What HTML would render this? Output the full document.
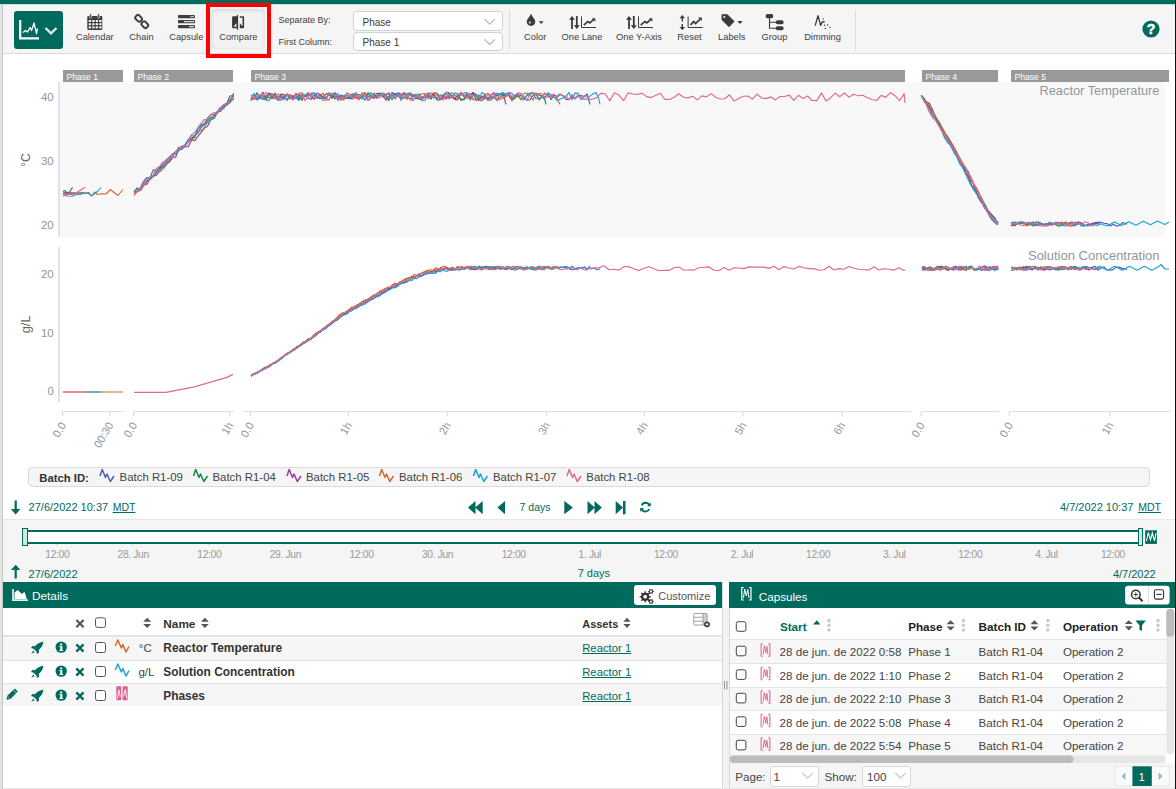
<!DOCTYPE html>
<html><head><meta charset="utf-8">
<style>
*{box-sizing:border-box;margin:0;padding:0}
html,body{width:1176px;height:789px;overflow:hidden;background:#fff;font-family:"Liberation Sans",sans-serif;position:relative}
.a{position:absolute}
.t{position:absolute;white-space:nowrap;line-height:1}
.tool{position:absolute;top:33px;width:70px;text-align:center;font-size:9.3px;color:#3d3d3d;white-space:nowrap;line-height:1}
svg{position:absolute;overflow:visible}
.teal{color:#00695c}
</style></head><body>
<!-- top strip -->
<div class="a" style="left:0;top:0;width:1176px;height:4px;background:#006a5d"></div>
<div class="a" style="left:0;top:4px;width:1176px;height:1px;background:#bfe3de"></div>
<!-- left border -->
<div class="a" style="left:0;top:4px;width:2px;height:785px;background:#e4e4e4"></div>
<div class="a" style="left:2px;top:4px;width:1px;height:785px;background:#c6c6c6"></div>
<!-- toolbar -->
<div class="a" style="left:3px;top:5px;width:1173px;height:48px;background:#f5f5f5"></div>
<div class="a" style="left:3px;top:53px;width:1173px;height:1px;background:#dcdcdc"></div>
<!-- teal view button -->
<div class="a" style="left:14px;top:11px;width:49px;height:38px;background:#006a5d;border-radius:3px"></div>
<svg style="left:0;top:0" width="70" height="55">
 <path d="M20.2 20 V38.3 H39" fill="none" stroke="#fff" stroke-width="2.2"/>
 <path d="M23 32.5 L25.5 30.5 L27.5 32 L30 27.5 L31.5 30.5 L34 23 L36.5 33.5 L37.5 28.5" fill="none" stroke="#fff" stroke-width="1.3" stroke-linejoin="round"/>
 <path d="M45.5 28 L51 33.3 L56.5 28" fill="none" stroke="#e8e8e8" stroke-width="2.4"/>
</svg>
<!-- Calendar -->
<svg style="left:0;top:0" width="110" height="40">
 <rect x="87.3" y="16" width="15" height="14" rx="1.2" fill="#3d3d3d"/>
 <rect x="89.7" y="13.8" width="1.8" height="4.5" rx="0.9" fill="#3d3d3d" stroke="#f5f5f5" stroke-width="0.6"/>
 <rect x="97.7" y="13.8" width="1.8" height="4.5" rx="0.9" fill="#3d3d3d" stroke="#f5f5f5" stroke-width="0.6"/>
 <g fill="#f5f5f5">
  <rect x="88.7" y="20" width="2.4" height="2"/><rect x="92.2" y="20" width="2.4" height="2"/><rect x="95.7" y="20" width="2.4" height="2"/><rect x="99.2" y="20" width="2.4" height="2"/>
  <rect x="88.7" y="23.2" width="2.4" height="2"/><rect x="92.2" y="23.2" width="2.4" height="2"/><rect x="95.7" y="23.2" width="2.4" height="2"/><rect x="99.2" y="23.2" width="2.4" height="2"/>
  <rect x="88.7" y="26.4" width="2.4" height="2"/><rect x="92.2" y="26.4" width="2.4" height="2"/><rect x="95.7" y="26.4" width="2.4" height="2"/><rect x="99.2" y="26.4" width="2.4" height="2"/>
 </g>
</svg>
<div class="tool" style="left:59.8px">Calendar</div>
<!-- Chain -->
<svg style="left:0;top:0" width="160" height="40">
 <rect x="-3.4" y="-2.5" width="6.8" height="5" rx="1.9" transform="translate(138.6 18.3) rotate(45)" fill="none" stroke="#3d3d3d" stroke-width="1.9"/>
 <rect x="-3.4" y="-2.5" width="6.8" height="5" rx="1.9" transform="translate(144.8 24.7) rotate(45)" fill="none" stroke="#3d3d3d" stroke-width="1.9"/>
</svg>
<div class="tool" style="left:106.5px">Chain</div>
<!-- Capsule -->
<svg style="left:0;top:0" width="200" height="40">
 <rect x="178" y="15" width="17" height="3.2" rx="0.8" fill="#3d3d3d"/>
 <rect x="178" y="20" width="17" height="3.2" rx="0.8" fill="#3d3d3d"/>
 <rect x="178" y="25" width="17" height="3.2" rx="0.8" fill="#3d3d3d"/>
 <rect x="190.5" y="15.9" width="3.6" height="1.4" fill="#bdbdbd"/>
 <rect x="184" y="20.9" width="10.1" height="1.4" fill="#d0d0d0"/>
 <rect x="189" y="25.9" width="5.1" height="1.4" fill="#d0d0d0"/>
</svg>
<div class="tool" style="left:151.3px">Capsule</div>
<!-- Compare (active with red box) -->
<div class="a" style="left:211px;top:9px;width:54px;height:40px;border-radius:4px;background:#f2f2f2;box-shadow:inset 0 1px 4px rgba(0,0,0,0.13)"></div>
<svg style="left:0;top:0" width="260" height="40">
 <path d="M232.1 17.2 Q232.1 16.2 233.1 16.2 H237.1 V28.2 H233.1 Q232.1 28.2 232.1 27.2 Z" fill="#383838"/>
 <path d="M233.5 26.7 H236.5 V22.9 Z" fill="#f3f3f3"/>
 <rect x="236.9" y="14.8" width="1.2" height="15" rx="0.6" fill="#383838"/>
 <path d="M239.8 16.2 H243.1 Q244.1 16.2 244.1 17.2 V27.2 Q244.1 28.2 243.1 28.2 H239.8 V26.6 H242.5 V17.8 H239.8 Z" fill="#383838"/>
 <path d="M239.8 23.2 L243.2 27 H239.8 Z" fill="#383838"/>
</svg>
<div class="tool" style="left:203.3px">Compare</div>
<div class="a" style="left:206px;top:3px;width:65px;height:55px;border:4px solid #ff0000"></div>
<!-- Separate by -->
<div class="t" style="left:278.5px;top:16.3px;font-size:9px;color:#3d3d3d">Separate By:</div>
<div class="t" style="left:278.5px;top:37.6px;font-size:9px;color:#3d3d3d">First Column:</div>
<div class="a" style="left:353px;top:11px;width:150px;height:20px;background:#fff;border:1px solid #d2d2d2;border-radius:4px"></div>
<div class="a" style="left:353px;top:32px;width:150px;height:19px;background:#fff;border:1px solid #d2d2d2;border-radius:4px"></div>
<div class="t" style="left:362.5px;top:17.8px;font-size:10px;color:#3a3a3a">Phase</div>
<div class="t" style="left:362.5px;top:38.1px;font-size:10px;color:#3a3a3a">Phase 1</div>
<svg style="left:0;top:0" width="510" height="55">
 <path d="M484.5 19 L489.8 24.2 L495 19" fill="none" stroke="#bdbdbd" stroke-width="1.3"/>
 <path d="M484.5 39.3 L489.8 44.5 L495 39.3" fill="none" stroke="#bdbdbd" stroke-width="1.3"/>
</svg>
<div class="a" style="left:509px;top:10px;width:1px;height:40px;background:#dcdcdc"></div>
<!-- Color -->
<svg style="left:0;top:0" width="560" height="40">
 <path d="M531 13.8 C529.8 16.8 526.7 19.2 526.7 21.8 C526.7 24.1 528.6 25.9 531 25.9 C533.4 25.9 535.3 24.1 535.3 21.8 C535.3 19.2 532.2 16.8 531 13.8 Z" fill="#3a3a3a"/>
 <circle cx="529.9" cy="22.6" r="1" fill="#f5f5f5"/>
 <path d="M538.8 21.3 H543.6 L541.2 23.9 Z" fill="#3a3a3a"/>
</svg>
<div class="tool" style="left:500.2px">Color</div>
<!-- One Lane -->
<svg style="left:0;top:0" width="670" height="40">
 <g transform="translate(0 0)">
 <g fill="#3a3a3a">
 <path d="M572 16 L575 19.8 H572.9 V29 H571.1 V19.8 H569 Z"/>
 <path d="M576.8 29 L579.8 25.2 H577.7 V16 H575.9 V25.2 H573.8 Z"/>
 </g>
 <path d="M581.5 16.5 V27.5 H596" fill="none" stroke="#3a3a3a" stroke-width="1"/>
 <path d="M583.8 25.2 L587.8 21.5 L589.8 23 L593.5 19.6" fill="none" stroke="#3a3a3a" stroke-width="1.7"/>
 <path d="M591.8 18.2 H595.3 V21.7 Z" fill="#3a3a3a"/>
 </g>
</svg>
<div class="tool" style="left:547px">One Lane</div>
<!-- One Y-Axis -->
<svg style="left:0;top:0" width="670" height="40">
 <g transform="translate(57 0)">
 <g fill="#3a3a3a">
 <path d="M572 16 L575 19.8 H572.9 V29 H571.1 V19.8 H569 Z"/>
 <path d="M576.8 29 L579.8 25.2 H577.7 V16 H575.9 V25.2 H573.8 Z"/>
 </g>
 <path d="M581.5 16.5 V27.5 H596" fill="none" stroke="#3a3a3a" stroke-width="1"/>
 <path d="M583.8 25.2 L587.8 21.5 L589.8 23 L593.5 19.6" fill="none" stroke="#3a3a3a" stroke-width="1.7"/>
 <path d="M591.8 18.2 H595.3 V21.7 Z" fill="#3a3a3a"/>
 </g>
</svg>
<div class="tool" style="left:604px">One Y-Axis</div>
<!-- Reset -->
<svg style="left:0;top:0" width="710" height="40">
 <path d="M682.3 15 L685 18.3 H683 V21.6 H681.6 V18.3 H679.6 Z" fill="#3a3a3a"/>
 <path d="M682.3 30.2 L685 26.9 H683 V23.9 H681.6 V26.9 H679.6 Z" fill="#3a3a3a"/>
 <path d="M688.1 16.4 V27.5 H702.7" fill="none" stroke="#3a3a3a" stroke-width="1"/>
 <path d="M690.5 24.9 L693.7 21.6 L695.6 23.6 L699.8 19.3" fill="none" stroke="#3a3a3a" stroke-width="1.7"/>
 <path d="M698 17.4 H701.8 V21.2 Z" fill="#3a3a3a"/>
</svg>
<div class="tool" style="left:654.5px">Reset</div>
<!-- Labels -->
<svg style="left:0;top:0" width="750" height="40">
 <path d="M722.1 14.7 H727 L733.8 21.4 L729 26.4 L722.1 19.6 Z" fill="#3a3a3a" stroke="#3a3a3a" stroke-width="1.1" stroke-linejoin="round"/>
 <circle cx="724.3" cy="16.9" r="1" fill="#f5f5f5"/>
 <path d="M737.4 21 H742.7 L740.05 24 Z" fill="#3a3a3a"/>
</svg>
<div class="tool" style="left:696.8px">Labels</div>
<!-- Group -->
<svg style="left:0;top:0" width="790" height="40">
 <rect x="765.7" y="14.1" width="7.5" height="4.1" rx="1.6" fill="#3a3a3a"/>
 <rect x="775.7" y="20.3" width="7.9" height="4" rx="1.8" fill="#3a3a3a"/>
 <rect x="775.7" y="26.2" width="7.9" height="4.1" rx="1.8" fill="#3a3a3a"/>
 <path d="M769.5 18 V28.3 H776.5 M769.5 22.3 H776.5" fill="none" stroke="#3a3a3a" stroke-width="1.1"/>
</svg>
<div class="tool" style="left:739.4px">Group</div>
<!-- Dimming -->
<svg style="left:0;top:0" width="840" height="40">
 <path d="M815.2 25.6 L818 15.6 L820.6 25.4 L822.3 21.7 L824.8 21.9" fill="none" stroke="#3a3a3a" stroke-width="1.3" stroke-linejoin="round"/>
 <g fill="#3a3a3a"><circle cx="823.3" cy="18.9" r="0.7"/><circle cx="824.5" cy="25.3" r="0.75"/><circle cx="827.7" cy="25" r="0.75"/><circle cx="825.3" cy="28.4" r="0.75"/><circle cx="830" cy="27.4" r="0.7"/></g>
</svg>
<div class="tool" style="left:787.5px">Dimming</div>
<div class="a" style="left:855px;top:10px;width:1px;height:40px;background:#dcdcdc"></div>
<!-- help -->
<svg style="left:0;top:0" width="1176" height="50">
 <circle cx="1151" cy="29" r="8.6" fill="#006a5d"/>
 <text x="1151.1" y="34.4" text-anchor="middle" font-family="Liberation Sans" font-weight="bold" font-size="14" fill="#fff" stroke="#fff" stroke-width="0.5">?</text>
</svg>
<!-- chart frame -->
<div class="a" style="left:60px;top:82px;width:1105px;height:155px;background:#f8f8f8"></div>
<div class="a" style="left:58px;top:82px;width:2px;height:155px;background:#dde3ea"></div>
<div class="a" style="left:58px;top:247px;width:2px;height:155px;background:#dde3ea"></div>
<!-- phase bars -->
<div class="a" style="left:63px;top:70px;width:60px;height:12px;background:#999"></div>
<div class="a" style="left:134px;top:70px;width:99px;height:12px;background:#999"></div>
<div class="a" style="left:251px;top:70px;width:654px;height:12px;background:#999"></div>
<div class="a" style="left:922px;top:70px;width:76px;height:12px;background:#999"></div>
<div class="a" style="left:1011px;top:70px;width:158px;height:12px;background:#999"></div>
<div class="t" style="left:66.5px;top:72.5px;font-size:8.6px;color:#fff">Phase 1</div>
<div class="t" style="left:137.5px;top:72.5px;font-size:8.6px;color:#fff">Phase 2</div>
<div class="t" style="left:254.5px;top:72.5px;font-size:8.6px;color:#fff">Phase 3</div>
<div class="t" style="left:925.5px;top:72.5px;font-size:8.6px;color:#fff">Phase 4</div>
<div class="t" style="left:1014.5px;top:72.5px;font-size:8.6px;color:#fff">Phase 5</div>
<!-- y labels -->
<div class="t" style="left:41px;top:91.5px;font-size:11.4px;color:#8c979c">40</div>
<div class="t" style="left:41px;top:155.5px;font-size:11.4px;color:#8c979c">30</div>
<div class="t" style="left:41px;top:219.5px;font-size:11.4px;color:#8c979c">20</div>
<div class="t" style="left:41px;top:268.5px;font-size:11.4px;color:#8c979c">20</div>
<div class="t" style="left:41px;top:327.5px;font-size:11.4px;color:#8c979c">10</div>
<div class="t" style="left:47.5px;top:386px;font-size:11.4px;color:#8c979c">0</div>
<div class="t" style="left:19px;top:153.5px;font-size:12px;color:#666;transform:rotate(-90deg);transform-origin:50% 50%">°C</div>
<div class="t" style="left:17px;top:317.5px;font-size:12.8px;color:#666;transform:rotate(-90deg);transform-origin:50% 50%">g/L</div>
<div class="t" style="right:16.5px;top:85px;font-size:12.8px;color:#8d989d">Reactor Temperature</div>
<div class="t" style="right:16.5px;top:249px;font-size:13px;color:#8d989d">Solution Concentration</div>
<!-- x axis -->
<svg style="left:0;top:0" width="1176" height="450">
 <g stroke="#d8dfe8" stroke-width="1.2" fill="none">
  <path d="M62.6 411.5 H123 M62.6 411.5 V416 M109.8 411.5 V416"/>
  <path d="M133.3 411.5 H233.8 M133.6 411.5 V416 M229.7 411.5 V416"/>
  <path d="M244 411.5 H911 M250.5 411.5 V416 M348.3 411.5 V416 M447.3 411.5 V416 M546.4 411.5 V416 M644.3 411.5 V416 M742.9 411.5 V416 M841.8 411.5 V416"/>
  <path d="M921.2 411.5 H998.9 M921.2 411.5 V416"/>
  <path d="M1009.5 411.5 H1170.4 M1009.5 411.5 V416 M1110 411.5 V416"/>
 </g>
 <g font-family="Liberation Sans" font-size="11" fill="#8c979c" text-anchor="end">
  <text transform="translate(66.5 425) rotate(-60)">0.0</text>
  <text transform="translate(113.7 425) rotate(-60)">00:30</text>
  <text transform="translate(137.5 425) rotate(-60)">0.0</text>
  <text transform="translate(233.6 425) rotate(-60)">1h</text>
  <text transform="translate(254.4 425) rotate(-60)">0.0</text>
  <text transform="translate(352.2 425) rotate(-60)">1h</text>
  <text transform="translate(451.2 425) rotate(-60)">2h</text>
  <text transform="translate(550.3 425) rotate(-60)">3h</text>
  <text transform="translate(648.2 425) rotate(-60)">4h</text>
  <text transform="translate(746.8 425) rotate(-60)">5h</text>
  <text transform="translate(845.7 425) rotate(-60)">6h</text>
  <text transform="translate(925.1 425) rotate(-60)">0.0</text>
  <text transform="translate(1013.4 425) rotate(-60)">0.0</text>
  <text transform="translate(1113.9 425) rotate(-60)">1h</text>
 </g>
</svg>
<svg style="left:0;top:0" width="1176" height="420"><path d="M63.0 193.0 L66.0 194.5 L69.0 192.5 L72.0 194.0 L76.0 193.0 L80.0 194.5 L84.0 193.0 L87.0 193.5" fill="none" stroke="#4a5fae" stroke-width="1.15" stroke-opacity="1.0" stroke-linejoin="round"/><path d="M63.0 191.5 L65.0 190.5 L67.0 193.0 L69.0 192.0" fill="none" stroke="#12884a" stroke-width="1.15" stroke-opacity="1.0" stroke-linejoin="round"/><path d="M63.0 193.5 L66.0 192.0 L68.5 194.5 L70.5 190.5 L72.5 187.6" fill="none" stroke="#9a3c9c" stroke-width="1.15" stroke-opacity="1.0" stroke-linejoin="round"/><path d="M63.0 194.0 L67.0 193.5 L72.0 192.5 L77.0 193.0 L81.0 192.2 L86.0 193.0 L89.0 192.5 L91.5 196.0 L95.0 192.0 L97.0 194.5 L101.0 193.8 L106.0 194.0 L110.5 189.5 L114.0 192.5 L118.0 195.5 L123.0 189.5" fill="none" stroke="#d16a2b" stroke-width="1.15" stroke-opacity="1.0" stroke-linejoin="round"/><path d="M63.0 196.0 L66.0 195.3 L70.0 194.0 L74.0 195.5 L78.5 194.0 L83.0 193.5 L88.0 193.0 L91.5 195.7 L95.0 193.5 L98.0 191.0 L101.0 187.5" fill="none" stroke="#1ca2da" stroke-width="1.15" stroke-opacity="1.0" stroke-linejoin="round"/><path d="M63.0 195.0 L67.0 196.0 L72.0 196.5 L75.0 194.0 L79.0 191.0 L85.0 187.2" fill="none" stroke="#e06894" stroke-width="1.15" stroke-opacity="1.0" stroke-linejoin="round"/><path d="M134.0 193.0 L137.2 191.8 L140.4 187.5 L143.6 181.3 L146.8 177.6 L150.0 178.2 L153.2 169.9 L156.4 170.6 L159.6 168.2 L162.8 163.4 L166.0 160.2 L169.2 157.2 L172.4 154.5 L175.6 151.6 L178.8 149.0 L182.0 146.1 L185.2 146.1 L188.4 141.7 L191.6 137.9 L194.8 135.9 L198.0 128.6 L201.2 124.9 L204.4 123.5 L207.6 118.1 L210.8 114.7 L214.0 115.1 L217.2 111.9 L220.4 111.4 L223.6 107.1 L226.8 103.8 L230.0 99.9 L233.2 95.4 L233.5 93.5" fill="none" stroke="#4a5fae" stroke-width="1.15" stroke-opacity="1.0" stroke-linejoin="round"/><path d="M134.0 191.8 L137.2 187.9 L140.4 189.6 L143.6 182.4 L146.8 181.6 L150.0 177.2 L153.2 176.8 L156.4 172.7 L159.6 167.1 L162.8 167.4 L166.0 164.8 L169.2 161.9 L172.4 157.8 L175.6 151.7 L178.8 149.7 L182.0 149.3 L185.2 144.7 L188.4 140.2 L191.6 140.0 L194.8 135.4 L198.0 132.5 L201.2 127.4 L204.4 124.6 L207.6 121.2 L210.8 117.0 L214.0 118.6 L217.2 112.8 L220.4 109.4 L223.6 104.8 L226.8 103.3 L230.0 96.0 L233.2 95.5 L233.5 93.6" fill="none" stroke="#12884a" stroke-width="1.15" stroke-opacity="1.0" stroke-linejoin="round"/><path d="M134.0 192.1 L137.2 188.9 L140.4 189.8 L143.6 183.7 L146.8 184.4 L150.0 178.9 L153.2 176.1 L156.4 175.3 L159.6 170.9 L162.8 166.1 L166.0 162.1 L169.2 162.0 L172.4 157.1 L175.6 157.2 L178.8 149.0 L182.0 148.6 L185.2 146.7 L188.4 146.6 L191.6 140.0 L194.8 140.7 L198.0 136.1 L201.2 132.3 L204.4 127.9 L207.6 126.2 L210.8 119.3 L214.0 116.0 L217.2 112.1 L220.4 107.4 L223.6 105.4 L226.8 105.4 L230.0 102.3 L233.2 94.6 L233.5 96.5" fill="none" stroke="#9a3c9c" stroke-width="1.15" stroke-opacity="1.0" stroke-linejoin="round"/><path d="M134.0 195.7 L137.2 191.4 L140.4 190.6 L143.6 186.1 L146.8 182.0 L150.0 177.1 L153.2 175.6 L156.4 169.9 L159.6 171.8 L162.8 169.4 L166.0 165.4 L169.2 158.1 L172.4 156.9 L175.6 153.1 L178.8 148.8 L182.0 147.8 L185.2 146.0 L188.4 141.1 L191.6 140.8 L194.8 137.2 L198.0 130.8 L201.2 130.6 L204.4 127.7 L207.6 120.8 L210.8 119.7 L214.0 116.3 L217.2 113.6 L220.4 108.1 L223.6 107.7 L226.8 103.7 L230.0 102.3 L233.2 98.5 L233.5 95.1" fill="none" stroke="#d16a2b" stroke-width="1.15" stroke-opacity="1.0" stroke-linejoin="round"/><path d="M134.0 191.8 L137.2 188.8 L140.4 189.7 L143.6 183.5 L146.8 179.8 L150.0 179.9 L153.2 176.1 L156.4 171.0 L159.6 169.0 L162.8 167.9 L166.0 161.9 L169.2 159.5 L172.4 153.8 L175.6 154.0 L178.8 150.8 L182.0 147.9 L185.2 144.4 L188.4 139.4 L191.6 135.2 L194.8 135.2 L198.0 133.0 L201.2 126.1 L204.4 123.8 L207.6 123.0 L210.8 120.2 L214.0 118.2 L217.2 111.6 L220.4 109.5 L223.6 108.8 L226.8 104.0 L230.0 102.1 L233.2 99.6 L233.5 98.3" fill="none" stroke="#1ca2da" stroke-width="1.15" stroke-opacity="1.0" stroke-linejoin="round"/><path d="M134.0 193.4 L137.2 189.8 L140.4 188.3 L143.6 181.9 L146.8 183.1 L150.0 177.0 L153.2 176.0 L156.4 168.5 L159.6 166.6 L162.8 162.1 L166.0 161.2 L169.2 157.5 L172.4 157.3 L175.6 152.1 L178.8 146.9 L182.0 148.6 L185.2 145.6 L188.4 141.7 L191.6 134.6 L194.8 132.4 L198.0 127.5 L201.2 123.2 L204.4 119.5 L207.6 119.5 L210.8 114.8 L214.0 112.5 L217.2 113.4 L220.4 108.6 L223.6 104.6 L226.8 104.2 L230.0 99.4 L233.2 97.2 L233.5 94.9" fill="none" stroke="#e06894" stroke-width="1.15" stroke-opacity="1.0" stroke-linejoin="round"/><path d="M251.0 98.7 L254.0 93.7 L257.0 100.0 L260.0 97.3 L263.0 95.1 L266.0 100.2 L269.0 93.6 L272.0 96.6 L275.0 93.1 L278.0 100.4 L281.0 97.1 L284.0 99.1 L287.0 94.7 L290.0 99.0 L293.0 98.2 L296.0 97.7 L299.0 100.3 L302.0 95.9 L305.0 95.8 L308.0 98.1 L311.0 99.3 L314.0 95.1 L317.0 97.9 L320.0 94.1 L323.0 96.9 L326.0 98.8 L329.0 92.8 L332.0 98.4 L335.0 92.4 L338.0 100.4 L341.0 96.2 L344.0 95.7 L347.0 98.4 L350.0 96.7 L353.0 98.4 L356.0 93.0 L359.0 97.0 L362.0 97.0 L365.0 100.1 L368.0 92.6 L371.0 96.1 L374.0 97.6 L377.0 96.9 L380.0 92.9 L383.0 97.3 L386.0 94.2 L389.0 93.9 L392.0 99.7 L395.0 94.0 L398.0 96.1 L401.0 98.6 L404.0 98.2 L407.0 96.9 L410.0 99.1 L413.0 96.2 L416.0 97.5 L419.0 99.2 L422.0 98.0 L425.0 97.7 L428.0 95.7 L431.0 97.0 L434.0 95.6 L437.0 98.6 L440.0 95.5 L443.0 96.2 L446.0 98.6 L449.0 96.5 L452.0 95.1 L455.0 99.2 L458.0 95.5 L461.0 99.4 L464.0 98.9 L467.0 96.1 L470.0 98.3 L473.0 92.6 L476.0 95.6 L479.0 99.5 L482.0 97.2 L485.0 97.0 L488.0 97.9 L491.0 98.0 L494.0 97.2 L497.0 95.8 L500.0 93.8 L503.0 94.8 L506.0 94.8 L509.0 95.9 L512.0 100.7 L515.0 95.3 L518.0 96.1 L521.0 95.4 L524.0 97.2 L527.0 100.3 L530.0 99.8 L533.0 95.5 L536.0 94.5 L539.0 99.7 L542.0 96.4 L545.0 98.1 L548.0 92.9 L551.0 99.6 L554.0 94.9 L557.0 96.5 L560.0 94.0 L563.0 95.8 L566.0 99.3 L569.0 99.3 L572.0 96.3 L575.0 98.8 L578.0 96.1 L581.0 95.4 L584.0 96.9 L587.0 94.0 L590.0 104.5" fill="none" stroke="#4a5fae" stroke-width="1.15" stroke-opacity="1.0" stroke-linejoin="round"/><path d="M251.0 98.2 L254.0 98.8 L257.0 92.8 L260.0 98.5 L263.0 99.2 L266.0 96.0 L269.0 92.8 L272.0 98.0 L275.0 94.4 L278.0 97.7 L281.0 95.5 L284.0 97.7 L287.0 94.5 L290.0 96.3 L293.0 96.7 L296.0 97.6 L299.0 94.0 L302.0 100.4 L305.0 94.7 L308.0 94.9 L311.0 94.5 L314.0 92.9 L317.0 95.9 L320.0 98.8 L323.0 98.3 L326.0 93.9 L329.0 93.5 L332.0 95.0 L335.0 98.8 L338.0 96.4 L341.0 100.1 L344.0 97.8 L347.0 97.5 L350.0 98.7 L353.0 98.6 L356.0 95.2 L359.0 94.5 L362.0 96.0 L365.0 96.4 L368.0 93.5 L371.0 96.0 L374.0 97.7 L377.0 93.4 L380.0 93.5 L383.0 93.8 L386.0 94.7 L389.0 100.4 L392.0 92.5 L395.0 93.8 L398.0 93.7 L401.0 96.3 L404.0 92.4 L407.0 96.1 L410.0 93.7 L413.0 94.6 L416.0 99.0 L419.0 93.8 L422.0 97.5 L425.0 95.7 L428.0 95.8 L431.0 99.2 L434.0 93.7 L437.0 100.1 L440.0 99.8 L443.0 97.9 L446.0 92.7 L449.0 97.9 L452.0 97.3 L455.0 98.8 L458.0 94.1 L461.0 100.3 L464.0 99.7 L467.0 93.3 L470.0 94.9 L473.0 92.6 L476.0 99.3 L479.0 100.0 L482.0 100.6 L485.0 97.4 L488.0 97.9 L491.0 98.0 L494.0 97.1 L497.0 100.3 L500.0 97.4 L503.0 95.1 L506.0 96.6 L509.0 92.5 L512.0 98.4 L515.0 98.1 L518.0 95.8 L521.0 99.5 L524.0 98.6 L527.0 95.1 L530.0 93.0 L533.0 93.4 L536.0 93.8 L539.0 94.9 L542.0 96.1 L545.0 100.1 L546.0 104.5" fill="none" stroke="#12884a" stroke-width="1.15" stroke-opacity="1.0" stroke-linejoin="round"/><path d="M251.0 99.8 L254.0 98.0 L257.0 99.5 L260.0 95.7 L263.0 92.3 L266.0 98.9 L269.0 94.4 L272.0 93.5 L275.0 99.0 L278.0 98.1 L281.0 94.1 L284.0 94.5 L287.0 100.2 L290.0 94.6 L293.0 98.2 L296.0 93.4 L299.0 99.1 L302.0 93.3 L305.0 96.6 L308.0 92.6 L311.0 96.9 L314.0 99.4 L317.0 93.0 L320.0 94.6 L323.0 98.7 L326.0 97.4 L329.0 94.9 L332.0 97.6 L335.0 96.1 L338.0 99.5 L341.0 94.8 L344.0 98.7 L347.0 97.6 L350.0 98.5 L353.0 95.5 L356.0 98.4 L359.0 98.2 L362.0 95.6 L365.0 92.5 L368.0 100.4 L371.0 98.3 L374.0 94.0 L377.0 98.4 L380.0 94.6 L383.0 96.2 L386.0 99.5 L389.0 96.1 L392.0 94.7 L395.0 94.9 L398.0 92.9 L401.0 94.1 L404.0 94.6 L407.0 93.8 L410.0 92.8 L413.0 96.2 L416.0 94.1 L419.0 98.5 L422.0 100.0 L425.0 94.6 L428.0 97.1 L431.0 96.6 L434.0 92.9 L437.0 93.3 L440.0 99.7 L443.0 96.3 L446.0 99.1 L449.0 92.9 L452.0 97.3 L455.0 99.6 L458.0 99.6 L461.0 92.3 L464.0 96.7 L467.0 95.4 L470.0 98.7 L473.0 92.9 L476.0 94.5 L479.0 99.1 L482.0 96.2 L485.0 96.1 L488.0 100.4 L491.0 95.0 L494.0 92.7 L497.0 95.6 L500.0 93.6 L503.0 93.0 L506.0 104.5" fill="none" stroke="#9a3c9c" stroke-width="1.15" stroke-opacity="1.0" stroke-linejoin="round"/><path d="M251.0 100.3 L254.0 97.2 L257.0 97.7 L260.0 95.0 L263.0 97.1 L266.0 98.6 L269.0 97.2 L272.0 99.0 L275.0 96.9 L278.0 94.0 L281.0 97.2 L284.0 96.4 L287.0 93.7 L290.0 97.5 L293.0 99.2 L296.0 93.4 L299.0 96.9 L302.0 98.5 L305.0 95.7 L308.0 94.6 L311.0 95.4 L314.0 96.9 L317.0 98.1 L320.0 97.0 L323.0 93.2 L326.0 99.2 L329.0 100.1 L332.0 93.2 L335.0 94.4 L338.0 93.8 L341.0 99.4 L344.0 99.9 L347.0 92.7 L350.0 95.1 L353.0 93.9 L356.0 96.2 L359.0 100.0 L362.0 92.9 L365.0 93.7 L368.0 96.4 L371.0 96.7 L374.0 98.6 L377.0 96.0 L380.0 93.5 L383.0 95.3 L386.0 100.5 L389.0 98.6 L392.0 93.3 L395.0 99.1 L398.0 94.9 L401.0 98.9 L404.0 92.4 L407.0 99.6 L410.0 93.7 L413.0 96.1 L416.0 97.9 L419.0 96.6 L422.0 93.7 L425.0 93.5 L428.0 94.7 L431.0 92.7 L434.0 94.1 L437.0 93.4 L440.0 96.2 L443.0 95.3 L446.0 97.2 L449.0 94.7 L452.0 92.6 L455.0 95.1 L458.0 98.6 L461.0 94.4 L464.0 95.7 L467.0 98.6 L470.0 95.7 L473.0 99.8 L476.0 100.0 L479.0 94.9 L482.0 98.5 L485.0 94.4 L488.0 93.5 L491.0 96.0 L494.0 97.4 L497.0 100.2 L500.0 93.5 L503.0 98.3 L506.0 96.3 L509.0 93.4 L512.0 100.5 L515.0 98.1 L518.0 93.4 L521.0 99.9 L524.0 93.2 L527.0 93.1 L530.0 95.1 L533.0 100.2 L536.0 92.6 L539.0 100.0 L542.0 97.4 L545.0 92.9 L548.0 97.1 L551.0 96.2 L554.0 97.0 L557.0 98.5 L560.0 104.5" fill="none" stroke="#d16a2b" stroke-width="1.15" stroke-opacity="1.0" stroke-linejoin="round"/><path d="M251.0 100.7 L254.0 93.6 L257.0 99.1 L260.0 95.8 L263.0 98.9 L266.0 99.8 L269.0 100.6 L272.0 94.5 L275.0 96.1 L278.0 100.2 L281.0 100.2 L284.0 95.4 L287.0 100.2 L290.0 95.7 L293.0 95.4 L296.0 98.7 L299.0 96.3 L302.0 96.1 L305.0 95.5 L308.0 95.9 L311.0 93.5 L314.0 92.8 L317.0 98.6 L320.0 97.0 L323.0 97.9 L326.0 99.0 L329.0 94.2 L332.0 94.3 L335.0 94.6 L338.0 94.9 L341.0 98.7 L344.0 95.4 L347.0 95.0 L350.0 97.6 L353.0 93.9 L356.0 93.2 L359.0 98.2 L362.0 98.7 L365.0 94.8 L368.0 97.6 L371.0 92.6 L374.0 95.7 L377.0 97.2 L380.0 94.4 L383.0 95.2 L386.0 97.4 L389.0 97.3 L392.0 93.6 L395.0 98.2 L398.0 93.0 L401.0 100.4 L404.0 94.0 L407.0 94.4 L410.0 94.0 L413.0 100.6 L416.0 94.7 L419.0 97.4 L422.0 100.6 L425.0 100.3 L428.0 92.7 L431.0 96.7 L434.0 97.4 L437.0 98.2 L440.0 95.1 L443.0 95.1 L446.0 92.3 L449.0 92.6 L452.0 96.9 L455.0 92.9 L458.0 94.0 L461.0 95.1 L464.0 92.9 L467.0 92.6 L470.0 100.1 L473.0 96.0 L476.0 94.0 L479.0 98.3 L482.0 92.4 L485.0 94.4 L488.0 100.4 L491.0 99.8 L494.0 97.6 L497.0 93.1 L500.0 95.0 L503.0 92.5 L506.0 94.1 L509.0 92.5 L512.0 93.4 L515.0 97.6 L518.0 93.1 L521.0 93.6 L524.0 99.9 L527.0 95.1 L530.0 95.1 L533.0 93.0 L536.0 99.0 L539.0 98.0 L542.0 96.9 L545.0 97.5 L548.0 93.1 L551.0 94.5 L554.0 97.2 L557.0 100.3 L560.0 99.2 L563.0 97.7 L566.0 96.7 L569.0 92.4 L572.0 99.8 L575.0 92.9 L578.0 93.4 L581.0 98.1 L584.0 99.1 L587.0 98.9 L590.0 96.1 L593.0 93.8 L596.0 92.6 L599.0 99.5 L600.0 104.5" fill="none" stroke="#1ca2da" stroke-width="1.15" stroke-opacity="1.0" stroke-linejoin="round"/><path d="M251.0 94.4 L254.0 99.6 L257.0 95.7 L260.0 94.9 L263.0 96.5 L266.0 92.4 L269.0 96.0 L272.0 94.0 L275.0 98.3 L278.0 96.5 L281.0 99.6 L284.0 99.8 L287.0 95.0 L290.0 94.7 L293.0 100.2 L296.0 96.5 L299.0 93.1 L302.0 92.7 L305.0 100.6 L308.0 97.2 L311.0 92.8 L314.0 96.6 L317.0 96.5 L320.0 96.0 L323.0 100.3 L326.0 100.3 L329.0 93.3 L332.0 93.6 L335.0 95.7 L338.0 99.3 L341.0 97.5 L344.0 98.4 L347.0 97.1 L350.0 94.1 L353.0 99.2 L356.0 92.4 L359.0 98.2 L362.0 93.9 L365.0 96.3 L368.0 100.5 L371.0 96.8 L374.0 92.8 L377.0 95.9 L380.0 97.8 L383.0 92.8 L386.0 94.4 L389.0 92.5 L392.0 96.8 L395.0 95.5 L398.0 96.5 L401.0 94.8 L404.0 97.8 L407.0 93.8 L410.0 99.9 L413.0 100.4 L416.0 96.4 L419.0 96.2 L422.0 99.5 L425.0 94.7 L428.0 99.0 L431.0 94.7 L434.0 98.3 L437.0 95.1 L440.0 97.4 L443.0 100.1 L446.0 92.8 L449.0 99.1 L452.0 96.9 L455.0 95.5 L458.0 95.2 L461.0 92.9 L464.0 94.5 L467.0 97.5 L470.0 93.1 L473.0 97.9 L476.0 100.4 L479.0 100.5 L482.0 99.8 L485.0 99.1 L488.0 93.8 L491.0 100.4 L494.0 94.0 L497.0 99.6 L500.0 99.7 L503.0 97.5 L506.0 96.7 L509.0 94.0 L512.0 96.7 L515.0 94.7 L518.0 93.4 L521.0 93.4 L524.0 99.0 L527.0 100.0 L530.0 93.5 L533.0 92.4 L536.0 94.5 L539.0 93.4 L542.0 93.9 L545.0 97.2 L548.0 95.8 L551.0 95.9 L554.0 94.0 L557.0 97.9 L560.0 94.7 L563.0 95.7 L566.0 96.2 L569.0 99.9 L572.0 94.4 L575.0 98.3 L578.0 94.9 L581.0 99.8 L584.0 95.6 L587.0 96.5 L590.0 99.7 L596.0 98.3 L600.6 93.4 L605.2 93.7 L609.8 100.9 L614.4 92.8 L619.0 95.1 L623.6 100.7 L628.2 92.7 L632.8 94.0 L637.4 94.4 L642.0 93.3 L646.6 96.6 L651.2 97.6 L655.8 95.3 L660.4 93.5 L665.0 99.4 L669.6 99.4 L674.2 97.3 L678.8 93.8 L683.4 97.2 L688.0 97.9 L692.6 96.2 L697.2 99.9 L701.8 95.9 L706.4 96.9 L711.0 93.6 L715.6 97.3 L720.2 99.0 L724.8 98.7 L729.4 94.8 L734.0 100.9 L738.6 98.6 L743.2 96.2 L747.8 96.1 L752.4 99.1 L757.0 94.1 L761.6 98.0 L766.2 98.6 L770.8 96.9 L775.4 99.9 L780.0 96.5 L784.6 96.5 L789.2 95.0 L793.8 100.3 L798.4 95.3 L803.0 98.4 L807.6 96.0 L812.2 100.5 L816.8 100.6 L821.4 92.9 L826.0 101.0 L830.6 97.7 L835.2 93.2 L839.8 96.8 L844.4 93.0 L849.0 97.2 L853.6 94.2 L858.2 95.7 L862.8 95.2 L867.4 97.7 L872.0 99.5 L876.6 100.5 L881.2 95.4 L885.8 97.4 L890.4 92.6 L895.0 95.7 L899.6 100.7 L904.2 93.6 L905.0 103.0" fill="none" stroke="#e06894" stroke-width="1.15" stroke-opacity="1.0" stroke-linejoin="round"/><path d="M922.4 96.6 L924.9 99.7 L927.4 106.1 L930.1 108.9 L933.3 116.6 L936.6 118.7 L940.4 124.1 L942.5 132.0 L945.0 136.1 L947.7 140.2 L951.4 146.9 L954.5 151.4 L957.5 157.7 L961.1 163.8 L964.4 169.6 L967.0 171.8 L969.2 179.4 L972.2 186.3 L975.9 189.6 L979.1 196.3 L981.3 199.0 L984.2 207.5 L987.0 211.2 L990.2 217.3 L993.4 221.1 L997.3 224.5 L998.0 222.2" fill="none" stroke="#4a5fae" stroke-width="1.15" stroke-opacity="1.0" stroke-linejoin="round"/><path d="M921.8 95.6 L925.1 101.0 L928.9 106.5 L932.4 110.6 L934.8 115.0 L937.7 121.6 L940.7 125.6 L944.6 132.8 L946.8 135.4 L949.8 140.1 L953.6 148.2 L956.4 151.4 L959.0 158.9 L962.1 163.2 L964.7 168.2 L968.5 171.9 L970.7 180.1 L973.1 182.7 L975.3 191.7 L978.7 196.7 L981.3 199.8 L985.1 204.5 L988.8 212.4 L992.7 215.7 L995.2 218.5 L997.2 223.0 L998.0 223.0" fill="none" stroke="#12884a" stroke-width="1.15" stroke-opacity="1.0" stroke-linejoin="round"/><path d="M922.7 97.9 L926.0 101.6 L929.4 103.2 L932.9 110.6 L935.0 116.7 L937.3 122.2 L940.3 126.5 L942.5 132.4 L945.6 137.6 L949.1 141.0 L952.4 145.3 L955.7 153.1 L957.9 156.0 L960.4 162.3 L964.2 170.2 L966.5 173.8 L969.7 179.1 L971.8 186.2 L975.7 188.9 L978.1 197.2 L981.0 202.2 L984.2 205.5 L987.6 210.2 L991.5 214.3 L995.0 221.7 L997.8 221.7 L998.0 222.0" fill="none" stroke="#9a3c9c" stroke-width="1.15" stroke-opacity="1.0" stroke-linejoin="round"/><path d="M922.1 96.8 L924.9 102.4 L928.1 103.1 L931.8 110.9 L934.0 113.8 L937.8 120.2 L941.0 125.8 L944.4 131.4 L947.6 138.2 L951.2 142.3 L953.7 146.4 L957.0 153.0 L959.5 157.3 L962.4 162.5 L965.6 167.7 L967.9 173.6 L969.9 178.1 L973.4 183.4 L976.9 188.4 L980.1 195.0 L982.6 199.8 L985.8 207.3 L987.9 212.3 L991.1 215.1 L994.1 220.5 L997.2 224.6 L998.0 223.4" fill="none" stroke="#d16a2b" stroke-width="1.15" stroke-opacity="1.0" stroke-linejoin="round"/><path d="M921.1 94.9 L924.2 101.4 L926.8 104.9 L929.7 110.7 L932.0 114.5 L935.5 118.7 L939.4 125.8 L942.2 131.5 L944.6 138.0 L948.0 143.1 L950.4 145.1 L954.3 153.3 L956.7 156.5 L959.6 163.6 L962.7 167.7 L965.1 172.9 L967.9 179.0 L970.6 184.5 L974.1 190.6 L978.2 195.8 L981.1 201.3 L984.8 205.5 L987.2 211.6 L990.5 215.1 L993.5 220.4 L996.2 222.8 L998.0 224.3" fill="none" stroke="#1ca2da" stroke-width="1.15" stroke-opacity="1.0" stroke-linejoin="round"/><path d="M921.4 97.0 L923.5 99.0 L926.3 104.2 L928.7 111.0 L932.2 117.0 L935.7 120.8 L939.5 127.2 L943.0 132.9 L946.2 137.2 L948.5 142.1 L952.0 145.8 L955.4 151.6 L958.8 158.0 L962.0 164.5 L965.6 167.4 L968.1 173.2 L971.3 177.1 L974.2 185.2 L976.8 189.6 L979.4 196.4 L981.6 199.5 L984.5 206.6 L987.2 211.6 L989.9 215.6 L993.5 218.8 L996.8 222.6 L998.0 225.0" fill="none" stroke="#e06894" stroke-width="1.15" stroke-opacity="1.0" stroke-linejoin="round"/><path d="M1011.0 226.1 L1014.2 222.8 L1017.4 224.0 L1020.6 222.2 L1023.8 223.5 L1027.0 226.0 L1030.2 222.2 L1033.4 225.1 L1036.6 225.6 L1039.8 224.0 L1043.0 225.3 L1046.2 223.7 L1049.4 223.4 L1052.6 224.0 L1055.8 222.7 L1059.0 223.2 L1062.2 223.1 L1065.4 226.1 L1068.6 223.3 L1071.8 222.8 L1075.0 225.9 L1078.2 222.4 L1081.4 226.0 L1084.6 225.6 L1087.8 224.6 L1091.0 223.7 L1094.2 222.7 L1097.4 222.3 L1100.6 222.3 L1103.8 223.3 L1107.0 223.6 L1110.2 225.9 L1113.4 224.2 L1116.6 226.2 L1119.8 225.0 L1123.0 222.4 L1126.2 224.2 L1127.0 222.5" fill="none" stroke="#4a5fae" stroke-width="1.15" stroke-opacity="1.0" stroke-linejoin="round"/><path d="M1011.0 222.0 L1014.2 226.0 L1017.4 223.3 L1020.6 222.6 L1023.8 222.2 L1027.0 224.7 L1030.2 223.8 L1033.4 221.9 L1036.6 224.9 L1039.8 222.9 L1043.0 225.2 L1046.2 223.9 L1049.4 224.2 L1052.6 223.8 L1055.8 224.8 L1059.0 226.2 L1062.2 225.3 L1065.4 222.1 L1068.6 224.0 L1071.8 222.8 L1075.0 222.3 L1078.2 222.7 L1081.4 222.9 L1084.6 226.0 L1085.0 225.1" fill="none" stroke="#12884a" stroke-width="1.15" stroke-opacity="1.0" stroke-linejoin="round"/><path d="M1011.0 225.6 L1014.2 224.9 L1017.4 223.2 L1020.6 223.5 L1023.8 223.7 L1027.0 223.1 L1030.2 223.7 L1033.4 225.2 L1036.6 222.1 L1039.8 223.0 L1043.0 223.9 L1046.2 224.8 L1049.4 224.6 L1052.6 225.0 L1055.8 222.3 L1059.0 222.6 L1062.2 223.2 L1065.4 223.0 L1068.6 225.1 L1071.8 226.2 L1075.0 224.8 L1078.2 221.9 L1081.4 223.1 L1084.6 225.3 L1087.8 225.9 L1091.0 224.4 L1094.2 223.3 L1097.4 223.4 L1100.0 224.6" fill="none" stroke="#9a3c9c" stroke-width="1.15" stroke-opacity="1.0" stroke-linejoin="round"/><path d="M1011.0 225.6 L1014.2 223.3 L1017.4 222.6 L1020.6 221.8 L1023.8 222.4 L1027.0 225.5 L1030.2 224.5 L1033.4 226.2 L1036.6 222.1 L1039.8 223.4 L1043.0 225.3 L1046.2 224.7 L1049.4 222.1 L1052.6 223.6 L1055.8 224.6 L1059.0 224.8 L1062.2 223.8 L1065.4 222.6 L1068.6 226.1 L1071.8 223.9 L1075.0 225.0 L1078.2 224.2 L1080.0 222.2" fill="none" stroke="#d16a2b" stroke-width="1.15" stroke-opacity="1.0" stroke-linejoin="round"/><path d="M1011.0 222.8 L1014.2 222.1 L1017.4 222.6 L1020.6 222.7 L1023.8 223.6 L1027.0 223.2 L1030.2 223.4 L1033.4 225.4 L1036.6 221.9 L1039.8 222.3 L1043.0 225.4 L1046.2 224.1 L1049.4 223.7 L1052.6 223.0 L1055.8 224.2 L1059.0 222.8 L1062.2 225.6 L1065.4 225.4 L1068.6 223.2 L1071.8 221.9 L1075.0 225.7 L1078.2 223.1 L1081.4 224.7 L1084.6 225.6 L1087.8 225.3 L1091.0 225.6 L1094.2 224.0 L1097.4 225.5 L1100.0 223.8 L1107.2 226.0 L1114.4 222.1 L1121.6 225.6 L1128.8 221.7 L1136.0 225.2 L1143.2 221.3 L1150.4 224.8 L1157.6 220.9 L1164.8 224.4 L1169.0 222.0" fill="none" stroke="#1ca2da" stroke-width="1.15" stroke-opacity="1.0" stroke-linejoin="round"/><path d="M1011.0 223.0 L1014.2 223.9 L1017.4 223.3 L1020.6 225.2 L1023.8 225.5 L1027.0 222.4 L1030.2 222.5 L1033.4 223.5 L1036.6 223.8 L1039.8 226.0 L1043.0 225.9 L1046.2 226.1 L1049.4 225.0 L1052.6 224.8 L1055.8 223.0 L1059.0 223.4 L1062.2 221.8 L1065.4 225.5 L1068.6 223.0 L1071.8 222.1 L1075.0 223.2 L1078.2 223.2 L1081.4 225.0 L1084.6 221.8 L1087.8 222.8 L1091.0 225.7 L1094.2 225.6 L1095.0 224.6" fill="none" stroke="#e06894" stroke-width="1.15" stroke-opacity="1.0" stroke-linejoin="round"/><path d="M63.0 392.0 L123.0 392.0" fill="none" stroke="#d16a2b" stroke-width="1.1" stroke-opacity="1.0" stroke-linejoin="round"/><path d="M63.0 392.0 L85.0 392.0" fill="none" stroke="#e06894" stroke-width="1.1" stroke-opacity="1.0" stroke-linejoin="round"/><path d="M85.0 392.0 L101.0 392.0" fill="none" stroke="#1ca2da" stroke-width="1.1" stroke-opacity="1.0" stroke-linejoin="round"/><path d="M134.0 392.3 L166.0 392.3 L194.4 386.9 L227.0 377.4 L233.0 374.4" fill="none" stroke="#e06894" stroke-width="1.2" stroke-opacity="1.0" stroke-linejoin="round"/><path d="M251.0 375.7 L253.4 373.8 L255.8 373.7 L258.2 372.3 L260.6 370.5 L263.0 368.6 L265.4 367.5 L267.8 366.5 L270.2 365.1 L272.6 363.3 L275.0 362.3 L277.4 360.7 L279.8 358.8 L282.2 357.3 L284.6 355.6 L287.0 354.1 L289.4 352.9 L291.8 351.1 L294.2 348.9 L296.6 348.4 L299.0 346.3 L301.4 344.7 L303.8 343.5 L306.2 342.0 L308.6 340.6 L311.0 339.0 L313.4 337.1 L315.8 335.5 L318.2 332.7 L320.6 331.9 L323.0 329.4 L325.4 327.6 L327.8 325.6 L330.2 324.4 L332.6 321.9 L335.0 321.3 L337.4 319.7 L339.8 318.0 L342.2 315.1 L344.6 314.6 L347.0 313.6 L349.4 310.8 L351.8 309.8 L354.2 308.6 L356.6 307.5 L359.0 305.7 L361.4 305.0 L363.8 303.3 L366.2 302.5 L368.6 300.9 L371.0 299.8 L373.4 297.7 L375.8 297.1 L378.2 295.8 L380.6 294.4 L383.0 291.9 L385.4 292.1 L387.8 290.1 L390.2 288.5 L392.6 287.7 L395.0 286.7 L397.4 285.6 L399.8 284.1 L402.2 283.0 L404.6 282.1 L407.0 281.9 L409.4 280.1 L411.8 278.1 L414.2 277.9 L416.6 276.2 L419.0 274.9 L421.4 276.7 L423.8 274.2 L426.2 274.3 L428.6 273.1 L431.0 271.5 L433.4 273.3 L435.8 272.8 L438.2 269.6 L440.6 269.6 L443.0 269.1 L445.4 268.2 L447.8 269.9 L450.2 270.2 L452.6 270.0 L455.0 269.5 L457.4 266.9 L459.8 267.5 L462.2 268.5 L464.6 269.0 L467.0 267.7 L469.4 267.8 L471.8 269.3 L474.2 266.2 L476.6 267.1 L479.0 267.2 L481.4 269.9 L483.8 267.0 L486.2 266.3 L488.6 267.7 L491.0 268.6 L493.4 266.7 L495.8 269.3 L498.2 266.8 L500.6 268.8 L503.0 266.7 L505.4 269.5 L507.8 266.9 L510.2 268.9 L512.6 269.3 L515.0 267.1 L517.4 266.5 L519.8 268.3 L522.2 268.0 L524.6 267.9 L527.0 269.1 L529.4 267.9 L531.8 268.0 L534.2 268.0 L536.6 267.8 L539.0 267.6 L541.4 266.7 L543.8 267.2 L546.2 267.1 L548.6 267.0 L551.0 269.1 L553.4 266.5 L555.8 266.9 L558.2 268.1 L560.6 267.3 L563.0 267.0 L565.4 267.5 L567.8 268.0 L570.2 268.7 L572.6 269.8 L575.0 269.3 L577.4 267.7 L579.8 267.8 L582.2 267.7 L584.6 267.0 L587.0 269.7 L589.4 266.4 L590.0 266.9" fill="none" stroke="#4a5fae" stroke-width="1.15" stroke-opacity="1.0" stroke-linejoin="round"/><path d="M251.0 375.9 L253.4 374.5 L255.8 372.7 L258.2 372.6 L260.6 370.4 L263.0 369.4 L265.4 367.2 L267.8 367.4 L270.2 364.7 L272.6 363.9 L275.0 363.1 L277.4 361.6 L279.8 359.9 L282.2 358.1 L284.6 355.4 L287.0 353.4 L289.4 352.6 L291.8 350.2 L294.2 350.2 L296.6 346.8 L299.0 345.7 L301.4 343.8 L303.8 341.8 L306.2 341.0 L308.6 338.6 L311.0 338.4 L313.4 336.4 L315.8 334.0 L318.2 333.0 L320.6 331.1 L323.0 328.4 L325.4 327.5 L327.8 325.8 L330.2 323.4 L332.6 321.1 L335.0 320.3 L337.4 318.5 L339.8 315.6 L342.2 313.3 L344.6 313.1 L347.0 311.4 L349.4 309.2 L351.8 308.5 L354.2 306.6 L356.6 306.4 L359.0 304.0 L361.4 302.4 L363.8 300.7 L366.2 299.9 L368.6 299.7 L371.0 297.0 L373.4 296.0 L375.8 295.6 L378.2 292.5 L380.6 291.7 L383.0 291.3 L385.4 288.6 L387.8 288.7 L390.2 287.5 L392.6 285.1 L395.0 284.9 L397.4 283.7 L399.8 282.9 L402.2 281.1 L404.6 280.1 L407.0 278.7 L409.4 277.7 L411.8 276.4 L414.2 277.0 L416.6 275.9 L419.0 273.8 L421.4 274.0 L423.8 272.8 L426.2 271.5 L428.6 271.1 L431.0 272.3 L433.4 269.8 L435.8 269.9 L438.2 270.5 L440.6 267.7 L443.0 269.3 L445.4 266.8 L447.8 269.0 L450.2 269.3 L452.6 269.4 L455.0 269.9 L457.4 268.9 L459.8 269.9 L462.2 267.2 L464.6 268.1 L467.0 266.9 L469.4 266.4 L471.8 267.8 L474.2 268.8 L476.6 269.1 L479.0 266.2 L481.4 269.7 L483.8 267.0 L486.2 267.2 L488.6 269.3 L491.0 269.5 L493.4 268.9 L495.8 267.4 L498.2 267.9 L500.6 269.3 L503.0 267.5 L505.4 269.2 L507.8 269.1 L510.2 267.9 L512.6 269.5 L515.0 267.6 L517.4 268.9 L519.8 268.5 L522.2 267.4 L524.6 268.1 L527.0 268.4 L529.4 268.1 L531.8 266.5 L534.2 269.9 L536.6 269.8 L539.0 266.2 L541.4 269.7 L543.8 268.1 L546.0 266.6" fill="none" stroke="#12884a" stroke-width="1.15" stroke-opacity="1.0" stroke-linejoin="round"/><path d="M251.0 376.2 L253.4 374.2 L255.8 373.4 L258.2 372.4 L260.6 370.6 L263.0 368.4 L265.4 368.6 L267.8 367.1 L270.2 366.2 L272.6 363.6 L275.0 362.9 L277.4 361.5 L279.8 358.9 L282.2 357.4 L284.6 355.6 L287.0 353.4 L289.4 352.2 L291.8 350.7 L294.2 348.7 L296.6 348.3 L299.0 346.1 L301.4 344.7 L303.8 342.6 L306.2 341.1 L308.6 340.2 L311.0 338.1 L313.4 336.7 L315.8 334.6 L318.2 333.1 L320.6 331.9 L323.0 329.0 L325.4 327.7 L327.8 326.2 L330.2 323.4 L332.6 323.1 L335.0 320.5 L337.4 318.3 L339.8 317.4 L342.2 315.8 L344.6 313.9 L347.0 313.1 L349.4 310.2 L351.8 309.7 L354.2 308.7 L356.6 307.7 L359.0 305.8 L361.4 304.4 L363.8 302.6 L366.2 301.6 L368.6 300.2 L371.0 299.5 L373.4 298.0 L375.8 296.5 L378.2 295.5 L380.6 292.6 L383.0 292.5 L385.4 290.5 L387.8 289.7 L390.2 287.8 L392.6 287.0 L395.0 286.6 L397.4 284.1 L399.8 283.5 L402.2 282.7 L404.6 282.4 L407.0 280.1 L409.4 280.2 L411.8 277.8 L414.2 276.9 L416.6 276.4 L419.0 275.8 L421.4 275.8 L423.8 275.2 L426.2 272.7 L428.6 273.5 L431.0 272.5 L433.4 271.1 L435.8 271.6 L438.2 271.4 L440.6 269.3 L443.0 270.6 L445.4 267.6 L447.8 267.6 L450.2 269.8 L452.6 267.9 L455.0 268.9 L457.4 268.5 L459.8 267.0 L462.2 269.2 L464.6 269.1 L467.0 266.7 L469.4 267.1 L471.8 269.1 L474.2 269.6 L476.6 269.4 L479.0 268.0 L481.4 267.5 L483.8 267.8 L486.2 266.8 L488.6 268.0 L491.0 267.0 L493.4 266.7 L495.8 267.5 L498.2 266.3 L500.6 267.9 L503.0 268.7 L505.4 268.6 L506.0 269.8" fill="none" stroke="#9a3c9c" stroke-width="1.15" stroke-opacity="1.0" stroke-linejoin="round"/><path d="M251.0 376.3 L253.4 374.6 L255.8 373.8 L258.2 371.7 L260.6 371.1 L263.0 368.9 L265.4 368.0 L267.8 367.6 L270.2 365.6 L272.6 364.1 L275.0 362.9 L277.4 360.5 L279.8 359.8 L282.2 356.7 L284.6 355.4 L287.0 353.7 L289.4 352.2 L291.8 351.8 L294.2 348.5 L296.6 347.3 L299.0 346.1 L301.4 344.6 L303.8 343.1 L306.2 340.7 L308.6 338.7 L311.0 338.2 L313.4 335.2 L315.8 333.2 L318.2 331.7 L320.6 330.3 L323.0 329.2 L325.4 327.0 L327.8 324.9 L330.2 322.9 L332.6 321.4 L335.0 319.4 L337.4 317.0 L339.8 314.7 L342.2 313.1 L344.6 312.5 L347.0 310.9 L349.4 309.7 L351.8 307.0 L354.2 307.2 L356.6 304.9 L359.0 304.5 L361.4 302.6 L363.8 301.1 L366.2 300.3 L368.6 298.5 L371.0 297.3 L373.4 295.0 L375.8 294.4 L378.2 292.6 L380.6 290.8 L383.0 289.5 L385.4 288.8 L387.8 287.0 L390.2 286.8 L392.6 284.6 L395.0 283.3 L397.4 284.0 L399.8 281.7 L402.2 281.0 L404.6 279.3 L407.0 278.2 L409.4 277.5 L411.8 277.3 L414.2 274.4 L416.6 275.3 L419.0 274.9 L421.4 273.1 L423.8 271.9 L426.2 270.9 L428.6 270.1 L431.0 269.8 L433.4 270.9 L435.8 267.6 L438.2 269.6 L440.6 268.6 L443.0 266.2 L445.4 266.3 L447.8 268.8 L450.2 268.5 L452.6 267.2 L455.0 269.3 L457.4 266.8 L459.8 267.6 L462.2 266.5 L464.6 268.5 L467.0 266.4 L469.4 266.8 L471.8 269.0 L474.2 268.0 L476.6 268.6 L479.0 268.9 L481.4 268.4 L483.8 266.9 L486.2 268.8 L488.6 266.5 L491.0 267.1 L493.4 267.8 L495.8 266.5 L498.2 266.5 L500.6 268.6 L503.0 268.9 L505.4 267.5 L507.8 267.6 L510.2 266.9 L512.6 268.1 L515.0 268.3 L517.4 269.6 L519.8 266.3 L522.2 269.6 L524.6 269.9 L527.0 267.4 L529.4 268.9 L531.8 269.2 L534.2 268.6 L536.6 267.2 L539.0 268.5 L541.4 269.4 L543.8 266.5 L546.2 267.9 L548.6 266.2 L551.0 269.3 L553.4 269.1 L555.8 266.3 L558.2 268.9 L560.0 268.7" fill="none" stroke="#d16a2b" stroke-width="1.15" stroke-opacity="1.0" stroke-linejoin="round"/><path d="M251.0 374.9 L253.4 374.4 L255.8 373.4 L258.2 371.5 L260.6 370.5 L263.0 370.1 L265.4 368.2 L267.8 366.7 L270.2 364.7 L272.6 363.4 L275.0 363.1 L277.4 361.2 L279.8 359.8 L282.2 357.7 L284.6 356.1 L287.0 354.3 L289.4 353.1 L291.8 350.8 L294.2 349.5 L296.6 347.9 L299.0 346.7 L301.4 344.3 L303.8 342.4 L306.2 340.9 L308.6 339.5 L311.0 339.2 L313.4 337.4 L315.8 335.7 L318.2 333.4 L320.6 331.1 L323.0 330.0 L325.4 329.0 L327.8 326.6 L330.2 325.1 L332.6 322.9 L335.0 320.7 L337.4 319.8 L339.8 317.9 L342.2 315.9 L344.6 314.2 L347.0 313.7 L349.4 311.7 L351.8 310.9 L354.2 308.9 L356.6 308.5 L359.0 306.4 L361.4 305.3 L363.8 304.7 L366.2 303.0 L368.6 301.6 L371.0 299.6 L373.4 299.1 L375.8 296.9 L378.2 296.7 L380.6 295.1 L383.0 293.4 L385.4 292.3 L387.8 290.4 L390.2 289.7 L392.6 287.5 L395.0 288.0 L397.4 286.6 L399.8 284.3 L402.2 283.4 L404.6 282.9 L407.0 282.2 L409.4 279.8 L411.8 280.6 L414.2 278.1 L416.6 278.6 L419.0 277.2 L421.4 275.8 L423.8 274.8 L426.2 273.4 L428.6 272.7 L431.0 273.6 L433.4 273.3 L435.8 273.0 L438.2 270.5 L440.6 271.7 L443.0 269.1 L445.4 271.3 L447.8 271.1 L450.2 268.0 L452.6 270.5 L455.0 269.8 L457.4 269.6 L459.8 269.9 L462.2 268.6 L464.6 268.3 L467.0 267.6 L469.4 269.4 L471.8 269.5 L474.2 266.7 L476.6 269.0 L479.0 267.1 L481.4 266.8 L483.8 266.8 L486.2 268.3 L488.6 267.2 L491.0 267.0 L493.4 266.5 L495.8 267.3 L498.2 269.0 L500.6 266.2 L503.0 267.9 L505.4 268.4 L507.8 266.3 L510.2 267.2 L512.6 269.5 L515.0 269.9 L517.4 269.3 L519.8 266.7 L522.2 269.0 L524.6 267.8 L527.0 266.7 L529.4 267.9 L531.8 269.6 L534.2 269.4 L536.6 267.6 L539.0 266.3 L541.4 269.5 L543.8 269.8 L546.2 268.0 L548.6 267.0 L551.0 268.2 L553.4 268.7 L555.8 267.9 L558.2 267.4 L560.6 267.0 L563.0 267.2 L565.4 266.3 L567.8 267.1 L570.2 269.7 L572.6 266.1 L575.0 268.9 L577.4 269.1 L579.8 267.6 L582.2 268.4 L584.6 266.9 L587.0 268.6 L589.4 268.8 L591.8 268.9 L594.2 268.0 L596.6 269.8 L599.0 269.4 L600.0 268.3" fill="none" stroke="#1ca2da" stroke-width="1.15" stroke-opacity="1.0" stroke-linejoin="round"/><path d="M251.0 375.9 L253.4 373.9 L255.8 373.9 L258.2 372.1 L260.6 371.2 L263.0 368.9 L265.4 368.9 L267.8 366.0 L270.2 365.5 L272.6 363.4 L275.0 361.9 L277.4 361.3 L279.8 358.4 L282.2 357.3 L284.6 355.4 L287.0 354.9 L289.4 351.9 L291.8 350.7 L294.2 350.0 L296.6 348.1 L299.0 346.5 L301.4 345.4 L303.8 342.0 L306.2 341.6 L308.6 340.1 L311.0 338.4 L313.4 336.8 L315.8 333.8 L318.2 332.0 L320.6 331.5 L323.0 329.4 L325.4 326.9 L327.8 324.7 L330.2 323.8 L332.6 321.2 L335.0 320.6 L337.4 318.1 L339.8 317.1 L342.2 314.0 L344.6 313.2 L347.0 311.1 L349.4 311.0 L351.8 309.2 L354.2 307.3 L356.6 307.2 L359.0 305.4 L361.4 303.4 L363.8 303.0 L366.2 300.8 L368.6 300.4 L371.0 297.9 L373.4 297.8 L375.8 294.8 L378.2 294.6 L380.6 292.5 L383.0 291.3 L385.4 290.4 L387.8 287.9 L390.2 287.2 L392.6 285.9 L395.0 285.9 L397.4 283.9 L399.8 283.3 L402.2 281.9 L404.6 280.6 L407.0 281.0 L409.4 279.0 L411.8 278.3 L414.2 277.3 L416.6 276.5 L419.0 274.3 L421.4 273.1 L423.8 273.5 L426.2 272.0 L428.6 270.9 L431.0 272.9 L433.4 271.4 L435.8 270.1 L438.2 268.5 L440.6 269.9 L443.0 268.9 L445.4 267.5 L447.8 270.4 L450.2 270.2 L452.6 270.1 L455.0 269.6 L457.4 268.4 L459.8 267.5 L462.2 268.8 L464.6 266.8 L467.0 268.5 L469.4 266.4 L471.8 266.2 L474.2 268.8 L476.6 267.4 L479.0 268.7 L481.4 269.1 L483.8 269.3 L486.2 268.4 L488.6 269.3 L491.0 268.6 L493.4 269.6 L495.8 269.5 L498.2 266.3 L500.6 267.1 L503.0 267.6 L505.4 267.1 L507.8 266.8 L510.2 269.4 L512.6 266.2 L515.0 266.8 L517.4 269.0 L519.8 266.9 L522.2 267.1 L524.6 269.8 L527.0 269.0 L529.4 267.8 L531.8 266.6 L534.2 267.1 L536.6 269.8 L539.0 269.1 L541.4 266.4 L543.8 268.8 L546.2 267.5 L548.6 268.8 L551.0 267.2 L553.4 266.6 L555.8 266.2 L558.2 267.2 L560.6 269.4 L563.0 269.5 L565.4 268.7 L567.8 268.9 L570.2 266.8 L572.6 267.4 L575.0 269.5 L577.4 269.8 L579.8 267.8 L582.2 269.0 L584.6 269.6 L587.0 269.9 L589.4 267.2 L591.8 268.6 L594.2 267.6 L596.6 267.9 L599.0 267.9 L600.0 267.2 L604.0 265.8 L609.0 269.7 L614.0 269.3 L619.0 270.1 L624.0 266.5 L629.0 266.9 L634.0 268.8 L639.0 270.6 L644.0 268.2 L649.0 266.7 L654.0 268.8 L659.0 270.7 L664.0 270.2 L669.0 270.4 L674.0 267.8 L679.0 267.1 L684.0 270.2 L689.0 269.8 L694.0 270.1 L699.0 267.7 L704.0 267.2 L709.0 266.9 L714.0 270.2 L719.0 270.5 L724.0 267.6 L729.0 270.2 L734.0 267.7 L739.0 268.0 L744.0 268.6 L749.0 266.9 L754.0 267.1 L759.0 267.1 L764.0 267.1 L769.0 268.4 L774.0 266.2 L779.0 269.8 L784.0 266.6 L789.0 268.0 L794.0 269.0 L799.0 266.4 L804.0 267.8 L809.0 268.6 L814.0 268.6 L819.0 270.3 L824.0 269.8 L829.0 266.3 L834.0 270.0 L839.0 268.6 L844.0 269.2 L849.0 266.5 L854.0 268.2 L859.0 269.3 L864.0 269.8 L869.0 269.9 L874.0 266.8 L879.0 270.0 L884.0 268.7 L889.0 269.2 L894.0 270.1 L899.0 267.8 L904.0 270.5 L905.0 270.3" fill="none" stroke="#e06894" stroke-width="1.15" stroke-opacity="1.0" stroke-linejoin="round"/><path d="M922.0 269.7 L924.6 267.8 L927.2 268.4 L929.8 266.9 L932.4 269.4 L935.0 270.0 L937.6 266.8 L940.2 269.4 L942.8 269.2 L945.4 266.3 L948.0 270.1 L950.6 268.2 L953.2 267.3 L955.8 266.2 L958.4 269.5 L961.0 267.6 L963.6 268.4 L966.2 267.0 L968.8 268.8 L971.4 267.8 L974.0 269.6 L976.6 269.0 L979.2 269.3 L981.8 267.2 L984.4 266.4 L987.0 270.0 L989.6 270.2 L992.2 268.9 L994.8 270.2 L997.4 269.2 L998.0 268.8" fill="none" stroke="#4a5fae" stroke-width="1.15" stroke-opacity="1.0" stroke-linejoin="round"/><path d="M922.0 267.9 L924.6 267.7 L927.2 268.3 L929.8 267.1 L932.4 268.0 L935.0 268.3 L937.6 266.2 L940.2 267.8 L942.8 267.4 L945.4 268.9 L948.0 269.7 L950.6 268.8 L953.2 269.0 L955.8 268.8 L958.4 267.2 L961.0 267.8 L963.6 269.8 L966.2 270.3 L968.8 266.9 L971.4 266.1 L974.0 270.3 L976.6 269.9 L979.2 268.8 L981.8 269.7 L984.4 268.7 L987.0 270.1 L989.6 267.2 L992.2 268.1 L994.8 269.1 L997.4 267.0 L998.0 269.2" fill="none" stroke="#12884a" stroke-width="1.15" stroke-opacity="1.0" stroke-linejoin="round"/><path d="M922.0 267.3 L924.6 269.2 L927.2 269.6 L929.8 268.0 L932.4 270.5 L935.0 268.9 L937.6 269.4 L940.2 266.2 L942.8 266.6 L945.4 269.2 L948.0 270.2 L950.6 268.9 L953.2 270.1 L955.8 266.4 L958.4 270.0 L961.0 270.0 L963.6 268.9 L966.2 268.0 L968.8 269.2 L971.4 267.2 L974.0 269.0 L976.6 269.2 L979.2 268.5 L981.8 267.2 L984.4 266.1 L987.0 267.0 L989.6 269.8 L992.2 267.0 L994.8 266.4 L997.4 267.2 L998.0 268.4" fill="none" stroke="#9a3c9c" stroke-width="1.15" stroke-opacity="1.0" stroke-linejoin="round"/><path d="M922.0 268.7 L924.6 270.0 L927.2 269.9 L929.8 270.4 L932.4 270.0 L935.0 268.1 L937.6 266.7 L940.2 270.3 L942.8 267.1 L945.4 268.8 L948.0 267.3 L950.6 269.7 L953.2 267.0 L955.8 268.0 L958.4 267.1 L961.0 269.9 L963.6 268.8 L966.2 268.9 L968.8 267.5 L971.4 266.9 L974.0 269.9 L976.6 269.5 L979.2 269.3 L981.8 270.5 L984.4 268.6 L987.0 266.9 L989.6 268.8 L992.2 267.4 L994.8 268.4 L997.4 268.1 L998.0 268.6" fill="none" stroke="#d16a2b" stroke-width="1.15" stroke-opacity="1.0" stroke-linejoin="round"/><path d="M922.0 270.2 L924.6 269.7 L927.2 267.9 L929.8 269.7 L932.4 269.9 L935.0 269.5 L937.6 268.5 L940.2 270.1 L942.8 268.3 L945.4 266.6 L948.0 267.3 L950.6 269.0 L953.2 267.8 L955.8 268.0 L958.4 267.9 L961.0 266.9 L963.6 266.5 L966.2 266.3 L968.8 269.1 L971.4 267.5 L974.0 268.1 L976.6 270.2 L979.2 268.9 L981.8 269.7 L984.4 269.5 L987.0 270.3 L989.6 266.4 L992.2 267.8 L994.8 270.3 L997.4 268.1 L998.0 270.3" fill="none" stroke="#1ca2da" stroke-width="1.15" stroke-opacity="1.0" stroke-linejoin="round"/><path d="M922.0 266.9 L924.6 266.4 L927.2 270.0 L929.8 267.9 L932.4 268.3 L935.0 270.2 L937.6 267.1 L940.2 270.4 L942.8 267.8 L945.4 267.2 L948.0 267.1 L950.6 268.4 L953.2 268.2 L955.8 270.0 L958.4 266.3 L961.0 266.3 L963.6 266.8 L966.2 268.8 L968.8 269.5 L971.4 268.2 L974.0 268.8 L976.6 268.9 L979.2 266.2 L981.8 267.2 L984.4 270.5 L987.0 267.6 L989.6 270.3 L992.2 268.3 L994.8 267.1 L997.4 266.1 L998.0 267.1" fill="none" stroke="#e06894" stroke-width="1.15" stroke-opacity="1.0" stroke-linejoin="round"/><path d="M1011.0 267.6 L1014.0 268.1 L1017.0 268.1 L1020.0 268.5 L1023.0 268.2 L1026.0 266.4 L1029.0 267.4 L1032.0 270.1 L1035.0 266.4 L1038.0 269.2 L1041.0 268.2 L1044.0 269.1 L1047.0 267.6 L1050.0 267.8 L1053.0 268.4 L1056.0 269.9 L1059.0 267.6 L1062.0 266.6 L1065.0 266.5 L1068.0 269.8 L1071.0 267.6 L1074.0 266.8 L1077.0 268.7 L1080.0 269.7 L1083.0 268.7 L1086.0 266.9 L1089.0 267.9 L1092.0 267.4 L1095.0 266.4 L1098.0 270.2 L1101.0 268.1 L1104.0 266.8 L1107.0 269.8 L1110.0 270.2 L1113.0 269.6 L1116.0 267.3 L1119.0 267.1 L1122.0 268.4 L1125.0 268.6 L1127.0 269.8" fill="none" stroke="#4a5fae" stroke-width="1.15" stroke-opacity="1.0" stroke-linejoin="round"/><path d="M1011.0 270.2 L1014.0 269.9 L1017.0 267.7 L1020.0 268.6 L1023.0 266.8 L1026.0 268.4 L1029.0 266.6 L1032.0 266.7 L1035.0 266.8 L1038.0 267.5 L1041.0 267.5 L1044.0 269.1 L1047.0 266.6 L1050.0 266.7 L1053.0 268.9 L1056.0 269.0 L1059.0 269.1 L1062.0 269.2 L1065.0 269.0 L1068.0 268.5 L1071.0 269.3 L1074.0 266.6 L1077.0 267.1 L1080.0 269.3 L1083.0 267.1 L1085.0 268.4" fill="none" stroke="#12884a" stroke-width="1.15" stroke-opacity="1.0" stroke-linejoin="round"/><path d="M1011.0 267.3 L1014.0 268.0 L1017.0 269.6 L1020.0 268.9 L1023.0 268.1 L1026.0 267.4 L1029.0 269.5 L1032.0 268.9 L1035.0 268.1 L1038.0 269.8 L1041.0 269.1 L1044.0 270.2 L1047.0 269.0 L1050.0 269.9 L1053.0 268.5 L1056.0 269.1 L1059.0 269.7 L1062.0 266.7 L1065.0 268.2 L1068.0 268.7 L1071.0 266.5 L1074.0 269.5 L1077.0 269.2 L1080.0 270.0 L1083.0 267.8 L1086.0 268.2 L1089.0 269.9 L1092.0 267.9 L1095.0 269.6 L1098.0 268.0 L1100.0 267.7" fill="none" stroke="#9a3c9c" stroke-width="1.15" stroke-opacity="1.0" stroke-linejoin="round"/><path d="M1011.0 267.4 L1014.0 267.2 L1017.0 268.0 L1020.0 266.9 L1023.0 269.6 L1026.0 270.2 L1029.0 266.7 L1032.0 266.5 L1035.0 266.3 L1038.0 270.0 L1041.0 266.6 L1044.0 269.0 L1047.0 267.5 L1050.0 267.1 L1053.0 267.3 L1056.0 269.1 L1059.0 266.4 L1062.0 269.8 L1065.0 268.6 L1068.0 267.2 L1071.0 267.1 L1074.0 268.9 L1077.0 268.8 L1080.0 267.6" fill="none" stroke="#d16a2b" stroke-width="1.15" stroke-opacity="1.0" stroke-linejoin="round"/><path d="M1011.0 267.6 L1014.0 268.2 L1017.0 269.9 L1020.0 268.5 L1023.0 269.7 L1026.0 268.9 L1029.0 268.5 L1032.0 268.3 L1035.0 269.0 L1038.0 268.3 L1041.0 269.2 L1044.0 267.0 L1047.0 267.6 L1050.0 269.8 L1053.0 267.9 L1056.0 269.7 L1059.0 270.1 L1062.0 268.6 L1065.0 266.7 L1068.0 269.3 L1071.0 269.0 L1074.0 267.5 L1077.0 269.8 L1080.0 268.2 L1083.0 266.5 L1086.0 266.6 L1089.0 267.2 L1092.0 268.7 L1095.0 269.6 L1098.0 266.7 L1100.0 266.4 L1107.4 270.3 L1114.8 266.3 L1122.2 270.3 L1129.6 266.3 L1137.0 270.3 L1144.4 266.3 L1151.8 270.3 L1159.2 266.3 L1161.0 264.5 L1165.0 269.0 L1169.0 269.0" fill="none" stroke="#1ca2da" stroke-width="1.15" stroke-opacity="1.0" stroke-linejoin="round"/><path d="M1011.0 268.8 L1014.0 267.9 L1017.0 268.1 L1020.0 269.6 L1023.0 270.0 L1026.0 270.2 L1029.0 269.4 L1032.0 266.3 L1035.0 266.9 L1038.0 268.6 L1041.0 270.1 L1044.0 266.6 L1047.0 268.4 L1050.0 267.9 L1053.0 267.9 L1056.0 267.4 L1059.0 267.4 L1062.0 267.3 L1065.0 266.7 L1068.0 268.5 L1071.0 268.1 L1074.0 269.2 L1077.0 268.9 L1080.0 270.1 L1083.0 267.7 L1086.0 269.8 L1089.0 267.8 L1092.0 268.9 L1095.0 269.5" fill="none" stroke="#e06894" stroke-width="1.15" stroke-opacity="1.0" stroke-linejoin="round"/></svg><!-- legend -->
<div class="a" style="left:28px;top:467px;width:1122px;height:20px;background:#f5f5f5;border:1px solid #dcdcdc;border-radius:4px"></div>
<div class="t" style="left:39.3px;top:472.6px;font-size:11.3px;font-weight:bold;color:#333">Batch ID:</div>
<svg style="left:0;top:0" width="700" height="490">
 <g fill="none" stroke-width="1.5" stroke-linejoin="round">
  <path d="M100.0 476 L102.2 469.5 L105.5 477.5 L107.0 474 L110.3 481.5 L114.0 476" stroke="#4a5fae"/>
  <path d="M193.5 476 L195.7 469.5 L199.0 477.5 L200.5 474 L203.8 481.5 L207.5 476" stroke="#12884a"/>
  <path d="M287.0 476 L289.2 469.5 L292.5 477.5 L294.0 474 L297.3 481.5 L301.0 476" stroke="#9a3c9c"/>
  <path d="M379.5 476 L381.7 469.5 L385.0 477.5 L386.5 474 L389.8 481.5 L393.5 476" stroke="#d16a2b"/>
  <path d="M473.5 476 L475.7 469.5 L479.0 477.5 L480.5 474 L483.8 481.5 L487.5 476" stroke="#1ca2da"/>
  <path d="M567.0 476 L569.2 469.5 L572.5 477.5 L574.0 474 L577.3 481.5 L581.0 476" stroke="#e06894"/>
 </g>
</svg>
<div class="t" style="left:119.6px;top:472.3px;font-size:11.4px;color:#444">Batch R1-09</div>
<div class="t" style="left:212.5px;top:472.3px;font-size:11.4px;color:#444">Batch R1-04</div>
<div class="t" style="left:306px;top:472.3px;font-size:11.4px;color:#444">Batch R1-05</div>
<div class="t" style="left:399px;top:472.3px;font-size:11.4px;color:#444">Batch R1-06</div>
<div class="t" style="left:493px;top:472.3px;font-size:11.4px;color:#444">Batch R1-07</div>
<div class="t" style="left:586.3px;top:472.3px;font-size:11.4px;color:#444">Batch R1-08</div>
<!-- date nav -->
<svg style="left:0;top:0" width="1176" height="590">
 <g fill="#006a5d">
  <path d="M14.6 500.6 H16.8 V509 H20.4 L15.7 514.5 L10.9 509 H14.6 Z"/>
  <path d="M475.5 501 V514.3 L468 507.6 Z M482.7 501 V514.3 L475.2 507.6 Z"/>
  <path d="M505 501 V514.3 L497.5 507.6 Z"/>
  <path d="M564.3 501 V514.3 L572.9 507.6 Z"/>
  <path d="M587.5 501 V514.3 L594.8 507.6 Z M594.5 501 V514.3 L601.8 507.6 Z"/>
  <path d="M615.7 501 V514.3 L623 507.6 Z"/><rect x="623" y="501" width="2.5" height="13.3"/>
 </g>
 <path d="M649.5 505 A4.3 4.3 0 0 0 641.8 505.3 M641.5 509.3 A4.3 4.3 0 0 0 649.2 509" fill="none" stroke="#006a5d" stroke-width="1.8"/>
 <path d="M650.8 502.5 V506.3 H647 Z M640.2 511.8 V508 H644 Z" fill="#006a5d"/>
</svg>
<div class="t" style="left:28.6px;top:501.8px;font-size:11px;color:#006a5d">27/6/2022 10:37</div>
<div class="t" style="left:112.7px;top:501.8px;font-size:10.5px;color:#006a5d;text-decoration:underline">MDT</div>
<div class="t" style="left:519.6px;top:501.6px;font-size:10.5px;color:#006a5d">7 days</div>
<div class="t" style="left:1060px;top:501.8px;font-size:11px;color:#006a5d">4/7/2022 10:37</div>
<div class="t" style="left:1138.2px;top:501.8px;font-size:10.5px;color:#006a5d;text-decoration:underline">MDT</div>
<!-- slider band -->
<div class="a" style="left:3px;top:519px;width:1172px;height:1px;background:#e6e6e6"></div>
<div class="a" style="left:3px;top:520px;width:1171px;height:63px;background:#f5f5f5"></div>
<div class="a" style="left:25px;top:529.5px;width:1116px;height:14.5px;background:#fff;border-top:2px solid #006a5d;border-bottom:2px solid #006a5d"></div>
<div class="a" style="left:22.4px;top:528px;width:5.5px;height:18px;background:#cdeae5;border:1.6px solid #006a5d"></div>
<div class="a" style="left:1138.2px;top:528px;width:4.7px;height:18px;background:#cdeae5;border:1.6px solid #006a5d"></div>
<svg style="left:0;top:0" width="1176" height="590">
 <rect x="1145.2" y="530.3" width="11.7" height="13.6" fill="#006a5d"/>
 <path d="M1146.5 541 L1148.3 532.5 L1150.5 540 L1152.3 533 L1154.5 541 L1156 533" fill="none" stroke="#fff" stroke-width="1.1"/>
 <g stroke="#d5dde6" stroke-width="1">
 <path d="M57 544 V546 M133 544 V546 M209 544 V546 M285 544 V546 M361 544 V546 M438 544 V546 M514 544 V546 M590 544 V546 M666 544 V546 M742 544 V546 M818 544 V546 M894 544 V546 M970 544 V546 M1046 544 V546 M1122 544 V546"/>
 </g>
 <g font-family="Liberation Sans" font-size="10.3" letter-spacing="-0.35" fill="#9a9a9a" text-anchor="middle">
  <text x="57.3" y="558">12:00</text><text x="133.2" y="558">28. Jun</text>
  <text x="209.3" y="558">12:00</text><text x="285.4" y="558">29. Jun</text>
  <text x="361.5" y="558">12:00</text><text x="437.6" y="558">30. Jun</text>
  <text x="513.7" y="558">12:00</text><text x="589.8" y="558">1. Jul</text>
  <text x="665.9" y="558">12:00</text><text x="742" y="558">2. Jul</text>
  <text x="818.1" y="558">12:00</text><text x="894.2" y="558">3. Jul</text>
  <text x="970.3" y="558">12:00</text><text x="1046.4" y="558">4. Jul</text>
  <text x="1112.9" y="558">12:00</text>
 </g>
</svg>
<svg style="left:0;top:0" width="40" height="590"><path d="M14.6 578.4 H16.8 V570 H20.4 L15.7 564.8 L10.9 570 H14.6 Z" fill="#006a5d"/></svg>
<div class="t" style="left:28.6px;top:568.6px;font-size:11px;color:#006a5d">27/6/2022</div>
<div class="t" style="left:577.7px;top:568.4px;font-size:11px;color:#006a5d">7 days</div>
<div class="t" style="left:1112.9px;top:568.6px;font-size:11px;color:#006a5d">4/7/2022</div>
<!-- DETAILS PANEL -->
<div class="a" style="left:3px;top:582px;width:719px;height:25.5px;background:#006a5d"></div>
<svg style="left:0;top:0" width="740" height="710">
 <path d="M13 589 V600.2 H27.9" fill="none" stroke="#e6f5f2" stroke-width="1.7"/>
 <path d="M14.5 598.9 V592.4 L17.7 589.9 L21.9 593.9 L24.5 591.7 L26.8 598.9 Z" fill="#fff"/>
</svg>
<div class="t" style="left:32px;top:590.5px;font-size:11.8px;color:#fff">Details</div>
<div class="a" style="left:634.4px;top:585.3px;width:82px;height:20px;background:#fff;border-radius:3px"></div>
<svg style="left:0;top:0" width="740" height="710"><path d="M649.33 596.06 L650.76 596.14 L650.76 597.46 L649.33 597.54 L648.65 599.20 L649.60 600.27 L648.67 601.20 L647.60 600.25 L645.94 600.93 L645.86 602.36 L644.54 602.36 L644.46 600.93 L642.80 600.25 L641.73 601.20 L640.80 600.27 L641.75 599.20 L641.07 597.54 L639.64 597.46 L639.64 596.14 L641.07 596.06 L641.75 594.40 L640.80 593.33 L641.73 592.40 L642.80 593.35 L644.46 592.67 L644.54 591.24 L645.86 591.24 L645.94 592.67 L647.60 593.35 L648.67 592.40 L649.60 593.33 L648.65 594.40Z M646.90 596.80 A1.7 1.7 0 1 0 643.50 596.80 A1.7 1.7 0 1 0 646.90 596.80Z M653.04 590.91 L653.86 590.95 L653.86 591.85 L653.04 591.89 L652.45 592.92 L652.83 593.65 L652.04 594.11 L651.60 593.41 L650.40 593.41 L649.96 594.11 L649.17 593.65 L649.55 592.92 L648.96 591.89 L648.14 591.85 L648.14 590.95 L648.96 590.91 L649.55 589.88 L649.17 589.15 L649.96 588.69 L650.40 589.39 L651.60 589.39 L652.04 588.69 L652.83 589.15 L652.45 589.88Z M651.90 591.40 A0.9 0.9 0 1 0 650.10 591.40 A0.9 0.9 0 1 0 651.90 591.40Z M653.04 601.11 L653.86 601.15 L653.86 602.05 L653.04 602.09 L652.45 603.12 L652.83 603.85 L652.04 604.31 L651.60 603.61 L650.40 603.61 L649.96 604.31 L649.17 603.85 L649.55 603.12 L648.96 602.09 L648.14 602.05 L648.14 601.15 L648.96 601.11 L649.55 600.08 L649.17 599.35 L649.96 598.89 L650.40 599.59 L651.60 599.59 L652.04 598.89 L652.83 599.35 L652.45 600.08Z M651.90 601.60 A0.9 0.9 0 1 0 650.10 601.60 A0.9 0.9 0 1 0 651.90 601.60Z" fill="#333" fill-rule="evenodd"/><circle cx="645.2" cy="596.8" r="1.7" fill="#fff"/><circle cx="651" cy="591.4" r="0.9" fill="#fff"/><circle cx="651" cy="601.6" r="0.9" fill="#fff"/></svg>
<div class="t" style="left:658.3px;top:591px;font-size:11px;color:#555">Customize</div>
<!-- header row -->
<div class="a" style="left:3px;top:635px;width:719px;height:2px;background:#e1e5e8"></div>
<svg style="left:0;top:0" width="740" height="710">
 <path d="M76.3 620 L83.6 627.2 M83.6 620 L76.3 627.2" stroke="#555" stroke-width="2.2"/>
 <rect x="95.5" y="617.8" width="10" height="9.6" rx="2" fill="#fff" stroke="#555" stroke-width="1"/>
 <path d="M143.2 621.8 L147.2 617.8 L151.2 621.8 Z M143.2 624 L147.2 628 L151.2 624 Z" fill="#555"/>
 <path d="M201 621.8 L204.9 617.8 L208.8 621.8 Z M201 624 L204.9 628 L208.8 624 Z" fill="#555"/>
 <path d="M623.4 621.8 L627 617.8 L630.6 621.8 Z M623.4 624 L627 628 L630.6 624 Z" fill="#555"/>
 <rect x="703" y="613.5" width="4.3" height="11.5" fill="#d0d0d0"/>
 <g fill="none" stroke="#999" stroke-width="0.9">
  <rect x="693.8" y="613.5" width="13.2" height="11.5" rx="0.8"/>
  <path d="M693.8 617.3 H703 M693.8 621.2 H703 M703 613.5 V625"/>
 </g>
 <circle cx="707" cy="624.3" r="2.9" fill="#333"/>
 <path d="M705.4 624.3 H708.6 M707 622.7 V625.9" stroke="#fff" stroke-width="0.9"/>
</svg>
<div class="t" style="left:163.3px;top:618.6px;font-size:11.8px;font-weight:bold;color:#333">Name</div>
<div class="t" style="left:582.2px;top:619.2px;font-size:11px;font-weight:bold;color:#333">Assets</div>
<!-- rows -->
<div class="a" style="left:3px;top:637px;width:719px;height:22.5px;background:#f6f6f6"></div>
<div class="a" style="left:3px;top:659.5px;width:719px;height:1px;background:#dfe4e6"></div>
<div class="a" style="left:3px;top:683.3px;width:719px;height:1px;background:#dfe4e6"></div>
<div class="a" style="left:3px;top:684.3px;width:719px;height:21.5px;background:#f6f6f6"></div>
<svg style="left:0;top:0" width="740" height="710">
 
 <g transform="translate(31 641.7)"><path d="M12.3 0 C9 0.3 6 2 4 4.5 L1.3 4.3 L0 6.3 L2.7 7 L5.4 9.7 L6 12.3 L8 11 L7.8 8.3 C10.3 6.3 12 3.3 12.3 0 Z" fill="#006a5d"/><path d="M0.2 12.2 L2.3 8.8 L3.6 10.2 Z" fill="#006a5d"/></g><g transform="translate(55.5 641.5)"><circle cx="5.7" cy="5.6" r="5.7" fill="#006a5d"/><rect x="4.8" y="4.6" width="2" height="4.6" fill="#fff"/><rect x="3.9" y="4.6" width="2" height="1" fill="#fff"/><rect x="3.9" y="8.4" width="3.8" height="1" fill="#fff"/><circle cx="5.7" cy="2.9" r="1.1" fill="#fff"/></g><g transform="translate(75.5 643.6)"><path d="M0.8 0.8 L8 8 M8 0.8 L0.8 8" stroke="#006a5d" stroke-width="2.3"/></g><g transform="translate(95 642)"><rect x="0.5" y="0.5" width="10" height="10" rx="2" fill="#fff" stroke="#555" stroke-width="1"/></g>
 <g transform="translate(31 665.7)"><path d="M12.3 0 C9 0.3 6 2 4 4.5 L1.3 4.3 L0 6.3 L2.7 7 L5.4 9.7 L6 12.3 L8 11 L7.8 8.3 C10.3 6.3 12 3.3 12.3 0 Z" fill="#006a5d"/><path d="M0.2 12.2 L2.3 8.8 L3.6 10.2 Z" fill="#006a5d"/></g><g transform="translate(55.5 665.5)"><circle cx="5.7" cy="5.6" r="5.7" fill="#006a5d"/><rect x="4.8" y="4.6" width="2" height="4.6" fill="#fff"/><rect x="3.9" y="4.6" width="2" height="1" fill="#fff"/><rect x="3.9" y="8.4" width="3.8" height="1" fill="#fff"/><circle cx="5.7" cy="2.9" r="1.1" fill="#fff"/></g><g transform="translate(75.5 667.6)"><path d="M0.8 0.8 L8 8 M8 0.8 L0.8 8" stroke="#006a5d" stroke-width="2.3"/></g><g transform="translate(95 666)"><rect x="0.5" y="0.5" width="10" height="10" rx="2" fill="#fff" stroke="#555" stroke-width="1"/></g>
 <g transform="translate(31 689.7)"><path d="M12.3 0 C9 0.3 6 2 4 4.5 L1.3 4.3 L0 6.3 L2.7 7 L5.4 9.7 L6 12.3 L8 11 L7.8 8.3 C10.3 6.3 12 3.3 12.3 0 Z" fill="#006a5d"/><path d="M0.2 12.2 L2.3 8.8 L3.6 10.2 Z" fill="#006a5d"/></g><g transform="translate(55.5 689.5)"><circle cx="5.7" cy="5.6" r="5.7" fill="#006a5d"/><rect x="4.8" y="4.6" width="2" height="4.6" fill="#fff"/><rect x="3.9" y="4.6" width="2" height="1" fill="#fff"/><rect x="3.9" y="8.4" width="3.8" height="1" fill="#fff"/><circle cx="5.7" cy="2.9" r="1.1" fill="#fff"/></g><g transform="translate(75.5 691.6)"><path d="M0.8 0.8 L8 8 M8 0.8 L0.8 8" stroke="#006a5d" stroke-width="2.3"/></g><g transform="translate(95 690)"><rect x="0.5" y="0.5" width="10" height="10" rx="2" fill="#fff" stroke="#555" stroke-width="1"/></g>
 <path d="M115.3 646 L117.8 640 L121.3 648 L122.8 644.5 L126 652 L129 646.5" fill="none" stroke="#d16a2b" stroke-width="1.5" stroke-linejoin="round"/>
 <path d="M115.3 670 L117.8 664 L121.3 672 L122.8 668.5 L126 676 L129 670.5" fill="none" stroke="#1ca2da" stroke-width="1.5" stroke-linejoin="round"/>
 <rect x="116.3" y="686.3" width="4.9" height="14" rx="0.8" fill="#e25a8e"/>
 <rect x="122.6" y="686.3" width="5.1" height="14" rx="0.8" fill="#e25a8e"/>
 <path d="M117.4 698.5 L118.8 689.5 L120.2 696.5 M123.6 696.5 L125.3 689 L126.8 698.5" fill="none" stroke="#fce4ef" stroke-width="1.1"/>
 <path d="M6.5 699.8 L7.3 695.8 L14.8 688.5 L17.8 691.5 L10.5 699 Z" fill="#006a5d"/>
 <path d="M13.3 690 L16.3 693" stroke="#fff" stroke-width="0.6"/>
 <path d="M7.8 696.5 L9.8 698.5" stroke="#fff" stroke-width="0.6"/>
</svg>
<div class="t" style="left:138.8px;top:643px;font-size:11.5px;color:#444">°C</div>
<div class="t" style="left:138.4px;top:667px;font-size:11.5px;color:#444">g/L</div>
<div class="t" style="left:163.3px;top:643px;font-size:11.9px;font-weight:bold;color:#333">Reactor Temperature</div>
<div class="t" style="left:163.3px;top:667px;font-size:11.9px;font-weight:bold;color:#333">Solution Concentration</div>
<div class="t" style="left:163.3px;top:691px;font-size:11.9px;font-weight:bold;color:#333">Phases</div>
<div class="t" style="left:582.2px;top:643px;font-size:11.3px;color:#006a5d;text-decoration:underline">Reactor 1</div>
<div class="t" style="left:582.2px;top:667px;font-size:11.3px;color:#006a5d;text-decoration:underline">Reactor 1</div>
<div class="t" style="left:582.2px;top:691px;font-size:11.3px;color:#006a5d;text-decoration:underline">Reactor 1</div>
<!-- splitter -->
<div class="a" style="left:722px;top:582px;width:1px;height:207px;background:#d8d8d8"></div>
<div class="a" style="left:723px;top:607.5px;width:6px;height:181.5px;background:#f3f3f3"></div>
<div class="a" style="left:729px;top:607.5px;width:1px;height:181.5px;background:#d8d8d8"></div>
<svg style="left:0;top:0" width="740" height="700"><g stroke="#999" stroke-width="1.1"><path d="M724.5 681 V689.5 M727 681 V689.5"/></g></svg>
<div class="a" style="left:3px;top:787.5px;width:1172px;height:1.5px;background:#e8e8e8"></div>
<!-- CAPSULES PANEL -->
<div class="a" style="left:729px;top:582px;width:446px;height:25.5px;background:#006a5d"></div>
<svg style="left:0;top:0" width="1176" height="789">
 <path d="M743.8 587.5 H741.8 V600 H743.8 M749 587.5 H751 V600 H749" fill="none" stroke="#fff" stroke-width="1.2"/>
 <path d="M743.5 598 L744.7 589 L746.4 596 L747.8 589.5 L749 598" fill="none" stroke="#fff" stroke-width="1"/>
 <rect x="1125.1" y="585.8" width="44.5" height="18.8" rx="3" fill="#fff"/>
 <path d="M1148.6 586 V604.5" stroke="#ddd" stroke-width="1"/>
 <circle cx="1135.8" cy="594.5" r="4.3" fill="none" stroke="#333" stroke-width="1.5"/>
 <path d="M1138.8 597.6 L1142.6 601.2" stroke="#333" stroke-width="2"/>
 <path d="M1133.6 594.5 H1138 M1135.8 592.3 V596.7" stroke="#333" stroke-width="0.9"/>
 <rect x="1154.4" y="589.7" width="9.2" height="9.4" rx="1.8" fill="none" stroke="#333" stroke-width="1.1"/>
 <path d="M1156.3 594.4 H1161.7" stroke="#333" stroke-width="1.1"/>
</svg>
<div class="t" style="left:758.7px;top:590.6px;font-size:11.7px;color:#fff">Capsules</div>
<!-- rows -->
<div class="a" style="left:730px;top:638.5px;width:436px;height:1.5px;background:#e1e5e8"></div>
<div class="a" style="left:730px;top:640px;width:436px;height:23px;background:#f7f7f7"></div>
<div class="a" style="left:730px;top:663px;width:436px;height:1px;background:#e0e6e8"></div>
<div class="a" style="left:730px;top:687px;width:436px;height:1px;background:#e0e6e8"></div>
<div class="a" style="left:730px;top:688px;width:436px;height:22px;background:#f7f7f7"></div>
<div class="a" style="left:730px;top:710px;width:436px;height:1px;background:#e0e6e8"></div>
<div class="a" style="left:730px;top:733.8px;width:436px;height:1px;background:#e0e6e8"></div>
<div class="a" style="left:730px;top:734.8px;width:436px;height:21px;background:#f7f7f7"></div>
<svg style="left:0;top:0" width="1176" height="789">
 
 <g transform="translate(735.8 621.2)"><rect x="0.5" y="0.5" width="9.6" height="9.6" rx="1.8" fill="#fff" stroke="#444" stroke-width="1"/></g>
 <g transform="translate(735.8 645.7)"><rect x="0.5" y="0.5" width="9.6" height="9.6" rx="1.8" fill="#fff" stroke="#444" stroke-width="1"/></g><g transform="translate(760.5 643.3)"><path d="M2.2 0.5 H0.6 V13 H2.2 M7.8 0.5 H9.4 V13 H7.8" fill="none" stroke="#e05a8a" stroke-width="1"/><path d="M2.6 11.2 L3.8 2.5 L5.3 9.5 L6.4 3 L7.4 11.2" fill="none" stroke="#e05a8a" stroke-width="0.9"/></g>
 <g transform="translate(735.8 669.3)"><rect x="0.5" y="0.5" width="9.6" height="9.6" rx="1.8" fill="#fff" stroke="#444" stroke-width="1"/></g><g transform="translate(760.5 666.8)"><path d="M2.2 0.5 H0.6 V13 H2.2 M7.8 0.5 H9.4 V13 H7.8" fill="none" stroke="#e05a8a" stroke-width="1"/><path d="M2.6 11.2 L3.8 2.5 L5.3 9.5 L6.4 3 L7.4 11.2" fill="none" stroke="#e05a8a" stroke-width="0.9"/></g>
 <g transform="translate(735.8 692.8)"><rect x="0.5" y="0.5" width="9.6" height="9.6" rx="1.8" fill="#fff" stroke="#444" stroke-width="1"/></g><g transform="translate(760.5 690.3)"><path d="M2.2 0.5 H0.6 V13 H2.2 M7.8 0.5 H9.4 V13 H7.8" fill="none" stroke="#e05a8a" stroke-width="1"/><path d="M2.6 11.2 L3.8 2.5 L5.3 9.5 L6.4 3 L7.4 11.2" fill="none" stroke="#e05a8a" stroke-width="0.9"/></g>
 <g transform="translate(735.8 716.3)"><rect x="0.5" y="0.5" width="9.6" height="9.6" rx="1.8" fill="#fff" stroke="#444" stroke-width="1"/></g><g transform="translate(760.5 713.8)"><path d="M2.2 0.5 H0.6 V13 H2.2 M7.8 0.5 H9.4 V13 H7.8" fill="none" stroke="#e05a8a" stroke-width="1"/><path d="M2.6 11.2 L3.8 2.5 L5.3 9.5 L6.4 3 L7.4 11.2" fill="none" stroke="#e05a8a" stroke-width="0.9"/></g>
 <g transform="translate(735.8 739.8)"><rect x="0.5" y="0.5" width="9.6" height="9.6" rx="1.8" fill="#fff" stroke="#444" stroke-width="1"/></g><g transform="translate(760.5 737.3)"><path d="M2.2 0.5 H0.6 V13 H2.2 M7.8 0.5 H9.4 V13 H7.8" fill="none" stroke="#e05a8a" stroke-width="1"/><path d="M2.6 11.2 L3.8 2.5 L5.3 9.5 L6.4 3 L7.4 11.2" fill="none" stroke="#e05a8a" stroke-width="0.9"/></g>
 <path d="M813.2 624.6 L816.8 620.3 L820.4 624.6 Z" fill="#006a5d"/>
 <g fill="#555">
  <path d="M946.5 624.2 L950.6 620.2 L954.7 624.2 Z M946.5 626.4 L950.6 630.4 L954.7 626.4 Z"/>
  <path d="M1030.4 624.2 L1034.4 620.2 L1038.4 624.2 Z M1030.4 626.4 L1034.4 630.4 L1038.4 626.4 Z"/>
  <path d="M1124.8 624 L1128.8 620.3 L1132.8 624 Z M1124.8 626.3 L1128.8 630.5 L1132.8 626.3 Z"/>
 </g>
 <path d="M1135.5 620.6 H1145.9 L1142 625.3 V631 L1139.4 629.5 V625.3 Z" fill="#006a5d"/>
 <g fill="#c8c8c8">
  <circle cx="829" cy="620.5" r="1.75"/><circle cx="829" cy="625.3" r="1.75"/><circle cx="829" cy="630.1" r="1.75"/>
  <circle cx="963.4" cy="620.5" r="1.75"/><circle cx="963.4" cy="625.3" r="1.75"/><circle cx="963.4" cy="630.1" r="1.75"/>
  <circle cx="1047.8" cy="620.5" r="1.75"/><circle cx="1047.8" cy="625.3" r="1.75"/><circle cx="1047.8" cy="630.1" r="1.75"/>
  <circle cx="1158" cy="620.5" r="1.75"/><circle cx="1158" cy="625.3" r="1.75"/><circle cx="1158" cy="630.1" r="1.75"/>
 </g>
 <!-- scrollbars -->
 <rect x="1166.3" y="608.8" width="8" height="145.5" rx="4" fill="#e6e6e6"/>
 <rect x="1166.3" y="608.8" width="8" height="28" rx="4" fill="#bcbcbc"/>
 <rect x="729.8" y="755.5" width="436.2" height="7.5" rx="3.7" fill="#e6e6e6"/>
 <rect x="729.8" y="755.5" width="343.7" height="7.5" rx="3.7" fill="#bcbcbc"/>
</svg>
<div class="t" style="left:779.9px;top:620.5px;font-size:11.7px;font-weight:bold;color:#006a5d">Start</div>
<div class="t" style="left:908.2px;top:620.5px;font-size:11.7px;font-weight:bold;color:#222">Phase</div>
<div class="t" style="left:978.6px;top:620.5px;font-size:11.7px;font-weight:bold;color:#222">Batch ID</div>
<div class="t" style="left:1062.9px;top:620.5px;font-size:11.7px;font-weight:bold;color:#222">Operation</div>
<div class="t" style="left:779.6px;top:646.1px;font-size:11.6px;color:#444">28 de jun. de 2022 0:58</div>
<div class="t" style="left:779.6px;top:669.6px;font-size:11.6px;color:#444">28 de jun. de 2022 1:10</div>
<div class="t" style="left:779.6px;top:693.1px;font-size:11.6px;color:#444">28 de jun. de 2022 2:10</div>
<div class="t" style="left:779.6px;top:716.6px;font-size:11.6px;color:#444">28 de jun. de 2022 5:08</div>
<div class="t" style="left:779.6px;top:740.1px;font-size:11.6px;color:#444">28 de jun. de 2022 5:54</div>
<div class="t" style="left:908.2px;top:646.1px;font-size:11.6px;color:#444">Phase 1</div>
<div class="t" style="left:908.2px;top:669.6px;font-size:11.6px;color:#444">Phase 2</div>
<div class="t" style="left:908.2px;top:693.1px;font-size:11.6px;color:#444">Phase 3</div>
<div class="t" style="left:908.2px;top:716.6px;font-size:11.6px;color:#444">Phase 4</div>
<div class="t" style="left:908.2px;top:740.1px;font-size:11.6px;color:#444">Phase 5</div>
<div class="t" style="left:978.6px;top:646.1px;font-size:11.6px;color:#444">Batch R1-04</div>
<div class="t" style="left:978.6px;top:669.6px;font-size:11.6px;color:#444">Batch R1-04</div>
<div class="t" style="left:978.6px;top:693.1px;font-size:11.6px;color:#444">Batch R1-04</div>
<div class="t" style="left:978.6px;top:716.6px;font-size:11.6px;color:#444">Batch R1-04</div>
<div class="t" style="left:978.6px;top:740.1px;font-size:11.6px;color:#444">Batch R1-04</div>
<div class="t" style="left:1062.9px;top:646.1px;font-size:11.6px;color:#444">Operation 2</div>
<div class="t" style="left:1062.9px;top:669.6px;font-size:11.6px;color:#444">Operation 2</div>
<div class="t" style="left:1062.9px;top:693.1px;font-size:11.6px;color:#444">Operation 2</div>
<div class="t" style="left:1062.9px;top:716.6px;font-size:11.6px;color:#444">Operation 2</div>
<div class="t" style="left:1062.9px;top:740.1px;font-size:11.6px;color:#444">Operation 2</div>
<!-- footer -->
<div class="a" style="left:730px;top:763px;width:445px;height:24.5px;background:#f5f5f5"></div>
<div class="a" style="left:769.6px;top:765.9px;width:49px;height:21px;background:#fff;border:1px solid #d8d8d8;border-radius:3px"></div>
<div class="a" style="left:862.4px;top:765.9px;width:49px;height:21px;background:#fff;border:1px solid #d8d8d8;border-radius:3px"></div>
<div class="t" style="left:735.3px;top:770.7px;font-size:11.6px;color:#444">Page:</div>
<div class="t" style="left:773.5px;top:770.7px;font-size:11.6px;color:#444">1</div>
<div class="t" style="left:824.5px;top:770.7px;font-size:11.6px;color:#444">Show:</div>
<div class="t" style="left:867px;top:770.7px;font-size:11.6px;color:#444">100</div>
<svg style="left:0;top:0" width="1176" height="789">
 <path d="M802.5 773 L807.7 778 L812.9 773 M895.3 773 L900.5 778 L905.7 773" fill="none" stroke="#c8c8c8" stroke-width="1.2"/>
 <rect x="1114.7" y="766.3" width="54.6" height="19.7" rx="2.5" fill="#fafafa" stroke="#e6e6e6" stroke-width="1"/>
 <rect x="1132.4" y="766.3" width="19.4" height="19.7" fill="#006a5d"/>
 <path d="M1125.5 772.5 V780 L1121.5 776.3 Z M1158.6 772.5 V780 L1162.6 776.3 Z" fill="#8fbfb8"/>
</svg>
<div class="t" style="left:1138.5px;top:771px;font-size:11.6px;color:#fff">1</div>
<!-- right border -->
<div class="a" style="left:1175px;top:0;width:1px;height:789px;background:#111"></div>
</body></html>
